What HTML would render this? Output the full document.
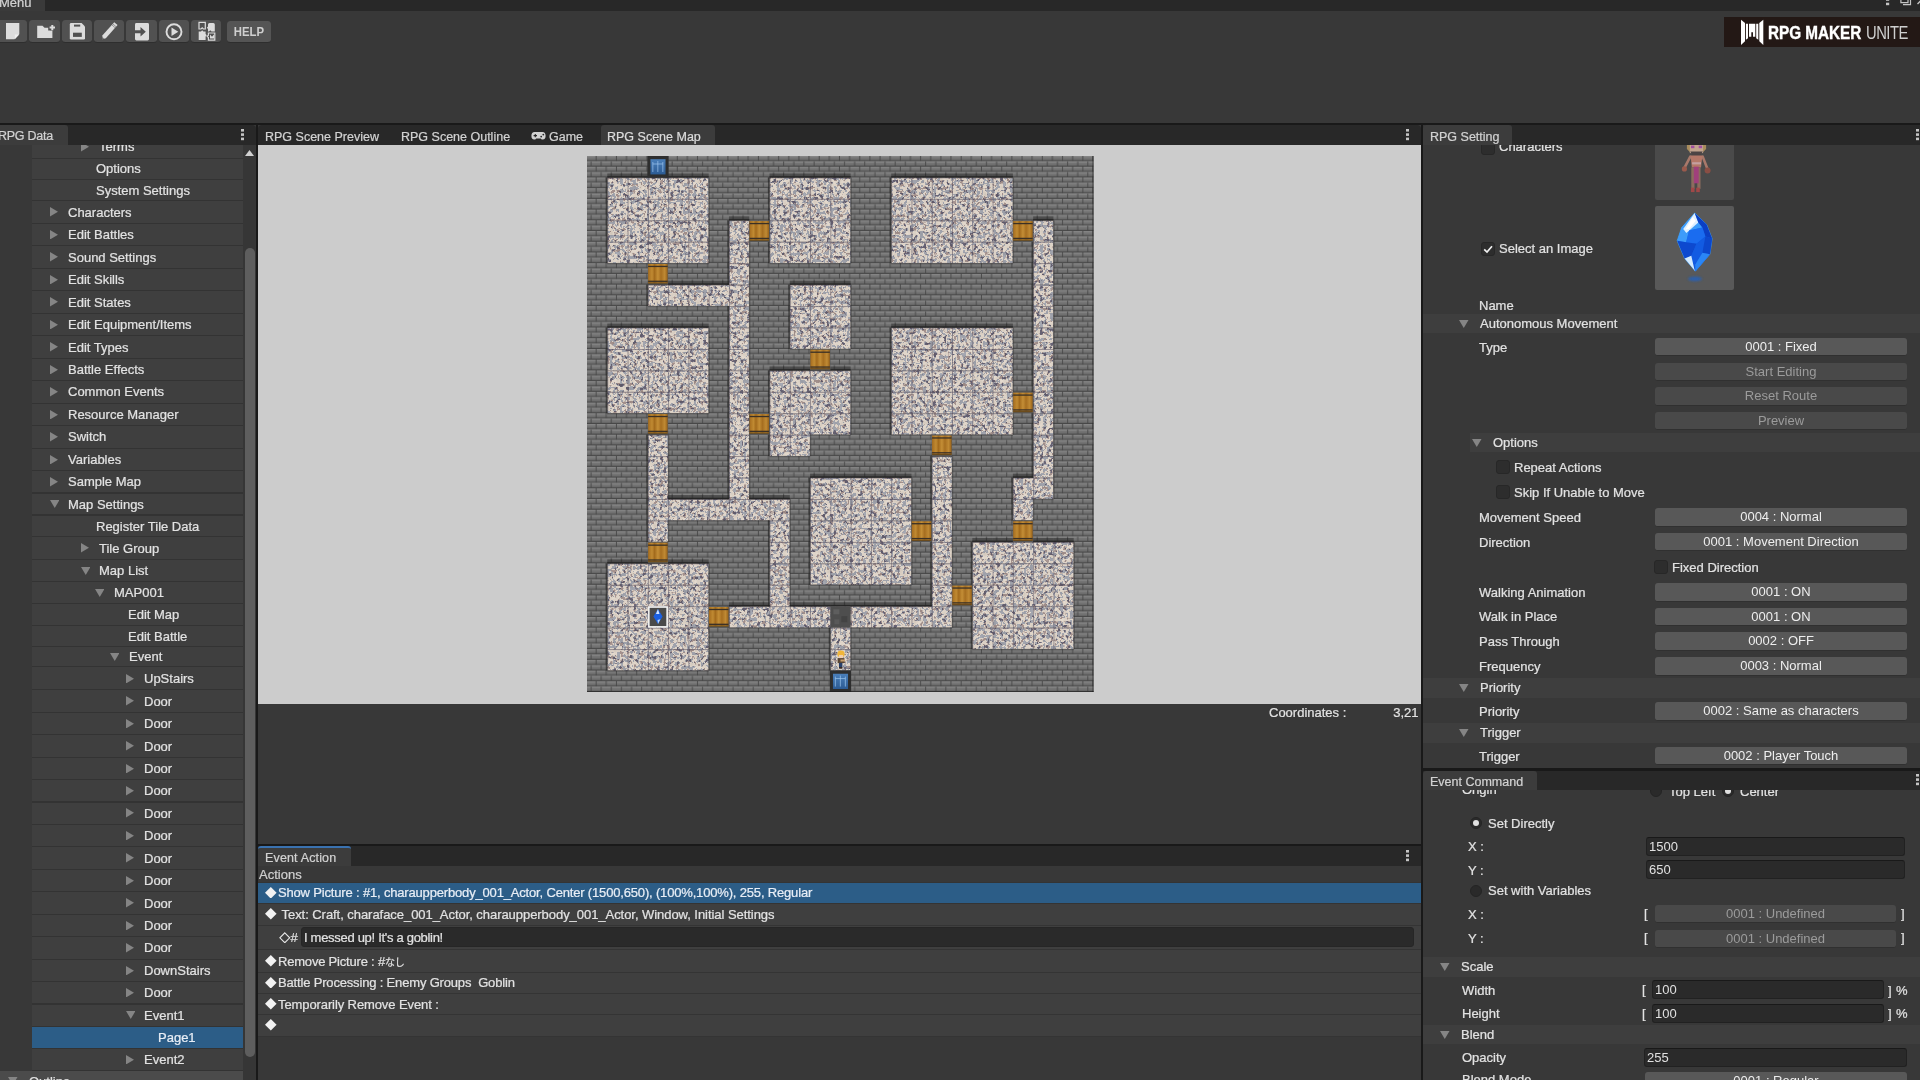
<!DOCTYPE html><html><head><meta charset="utf-8"><title>RPG Maker Unite</title><style>
html,body{margin:0;padding:0;background:#383838;}
body{width:1920px;height:1080px;overflow:hidden;position:relative;font-family:"Liberation Sans","Noto Sans CJK JP",sans-serif;font-size:13px;color:#dedede;line-height:16px;}
div,span,svg{position:absolute;box-sizing:border-box;white-space:nowrap;}
.t{height:16px;line-height:16px;-webkit-text-stroke:0.22px;}
.hdr{background:#282828;}
.tab{background:#3c3c3c;border-radius:0 3px 0 0;}
.tabt{font-size:12.5px;color:#d2d2d2;}
.row{background:#3f3f3f;left:32px;width:211px;}

.btn{background:#585858;border-radius:3px;text-align:center;color:#eeeeee;border-bottom:1px solid #303030;line-height:18px;}
.btn.dis{background:#494949;color:#9b9b9b;}
.inp{background:#2a2a2a;border:1px solid #212121;border-top-color:#191919;border-radius:3px;line-height:17px;color:#e0e0e0;}
.sec{background:#3e3e3e;}
.cb{width:14px;height:14px;background:#2d2d2d;border:1px solid #272727;border-radius:3px;}
.rd{width:12px;height:12px;background:#2a2a2a;border:1px solid #242424;border-radius:6px;}
.rd.on::after{content:"";position:absolute;left:2px;top:2px;width:6px;height:6px;border-radius:3px;background:#e0e0e0;}
.tb{background:#515151;border-radius:3.5px;top:20px;height:23.4px;border-bottom:1.2px solid #2e2e2e;}
.lrow{left:258px;width:1163px;background:#3f3f3f;}
.sel{background:#2c5d87;}
</style></head><body><div id="w" style="left:0;top:0;width:1920px;height:1080px;will-change:transform;overflow:hidden">
<div style="left:0;top:0;width:1920px;height:11px;background:#282828"></div>
<div style="left:0;top:0;width:45px;height:11px;background:#3a3a3a;overflow:hidden"><div class="t" style="left:-1px;top:-5px;color:#d2d2d2">Menu</div></div>
<svg style="left:1880px;top:0" width="40" height="11"><rect x="6" y="-1" width="3.2" height="1.8" fill="#c4c4c4"/><rect x="6" y="2.7" width="3.2" height="2.5" fill="#c4c4c4"/><path d="M20.9 0V2.6H28V0" fill="none" stroke="#c4c4c4" stroke-width="1.2"/><path d="M23 4.7H30.5V0" fill="none" stroke="#c4c4c4" stroke-width="1.2"/><path d="M37.5 4L41 0.5" stroke="#c4c4c4" stroke-width="1.4"/></svg>
<div class="tb" style="left:-3px;width:30.0px"></div>
<div class="tb" style="left:29.2px;width:30.8px"></div>
<div class="tb" style="left:62px;width:29.8px"></div>
<div class="tb" style="left:94px;width:30.0px"></div>
<div class="tb" style="left:126.2px;width:30.5px"></div>
<div class="tb" style="left:158.7px;width:30.1px"></div>
<div class="tb" style="left:191.2px;width:30.1px"></div>
<div class="tb" style="left:227px;width:44px;top:21px;height:22px;background:#555"></div>
<div class="t" style="left:227px;width:44px;top:24px;text-align:center;font-size:13.5px;font-weight:bold;color:#cfcfcf;-webkit-text-stroke:0;transform:scaleX(0.84)">HELP</div>
<svg style="left:0;top:20px" width="28" height="23"><path d="M6 3.1H19.3V14L14.3 19.2H6Z" fill="#dcdcdc"/><path d="M14.8 14.5H19.3L14.8 19.2Z" fill="#efefef"/></svg>
<svg style="left:29px;top:20px" width="31" height="23"><path d="M8.2 5.7H13.5L15.5 7.7H19.2V10.5H23.4V18H8.2Z" fill="#dcdcdc"/><path d="M20.6 7.6H26M23.3 4.9V10.3" stroke="#515151" stroke-width="4.4" fill="none"/><path d="M20.6 7.6H26M23.3 4.9V10.3" stroke="#dcdcdc" stroke-width="2" fill="none"/></svg>
<svg style="left:62px;top:20px" width="30" height="23"><path d="M9.2 3.1H19.6L23 6.5V18.2Q23 19.5 21.7 19.5H9.2Q7.8 19.5 7.8 18.2V4.4Q7.8 3.1 9.2 3.1Z" fill="#dcdcdc"/><rect x="12" y="4.6" width="6.2" height="2" fill="#515151"/><rect x="11" y="12.7" width="8.8" height="4.2" fill="#515151"/></svg>
<svg style="left:94px;top:20px" width="30" height="23"><path d="M8.1 19.2L8.55 15.34L20.25 2.14L23.55 5.06L11.85 18.26Z" fill="#dcdcdc"/><path d="M18.79 3.79L22.09 6.71M17.86 4.84L21.16 7.76" stroke="#515151" stroke-width="0.55"/><path d="M8.1 19.2L8.35 17L10 18.6Z" fill="#515151"/></svg>
<svg style="left:126px;top:20px" width="31" height="23"><path d="M10.4 3H21.6Q23 3 23 4.4V19.1Q23 20.5 21.6 20.5H10.4Q9 20.5 9 19.1V4.4Q9 3 10.4 3Z" fill="#dcdcdc"/><path d="M9 10.2H14.5V7L19.8 11.7L14.5 16.4V13.2H9Z" fill="#515151"/></svg>
<svg style="left:158px;top:20px" width="31" height="23"><circle cx="16" cy="11.8" r="7.5" fill="none" stroke="#dcdcdc" stroke-width="1.9"/><path d="M13.5 7.6L20.3 11.8L13.5 16Z" fill="#dcdcdc"/></svg>
<svg style="left:191px;top:20px" width="31" height="23"><path d="M8 2.3H14.3V9H12.3L11.2 7.8L10 9H8Z" fill="none" stroke="#dcdcdc" stroke-width="1.2"/><path d="M17 4.5Q17 3 18.5 3H22.3Q23.8 3 23.8 4.5V11.5H20.5L19.3 10.3L18 11.5H17V9L15.8 7.7L17 6.5Z" fill="#dcdcdc"/><path d="M7.7 11.5H10L11.2 10.3L12.4 11.5H14.6V14L15.8 15.2L14.6 16.4V20H7.7Z" fill="#dcdcdc"/><path d="M17.4 13H23.8V20.2H17.4V17.5L16.2 16.3L17.4 15.2Z" fill="none" stroke="#dcdcdc" stroke-width="1.2"/><path d="M19 14.5L21 16.8L23 14.5V18.5H19Z" fill="#dcdcdc"/></svg>
<div style="left:1724px;top:17px;width:196px;height:30px;background:#231815"></div>
<svg style="left:1740px;top:19px" width="26" height="28"><path d="M1 0.8L5 4V22.3L1 26Z" fill="#fff"/><path d="M5.9 4.7H8V19.2L5.9 20.8Z" fill="#fff"/><path d="M9 4.7H15.3V17.7H13V13.2H11.3V17.7H9Z" fill="#fff"/><path d="M16.2 4.7H18.3V20.8L16.2 19.2Z" fill="#fff"/><path d="M23.3 0.8L19.3 4V22.3L23.3 26Z" fill="#fff"/></svg>
<div class="t" style="left:1767.8px;top:24.6px;font-size:17.6px;font-weight:bold;color:#fff;-webkit-text-stroke:0.4px;transform-origin:0 50%;transform:scaleX(0.868)">RPG MAKER</div>
<div class="t" style="left:1865.5px;top:24.6px;font-size:17.6px;color:#cfcfcf;-webkit-text-stroke:0;letter-spacing:-0.6px;font-weight:normal;transform-origin:0 50%;transform:scaleX(0.84)">UNITE</div>
<div style="left:0;top:123px;width:1920px;height:2px;background:#191919"></div>
<div class="hdr" style="left:0;top:125px;width:256px;height:20px;border-radius:0 4px 0 0"></div>
<div class="tab" style="left:0;top:125px;width:68px;height:20px"></div>
<div class="t tabt" style="left:-2px;top:128.1px;letter-spacing:-0.25px">RPG Data</div>
<svg style="left:241px;top:129px" width="3" height="12"><rect x="0" y="0" width="3" height="2.6" fill="#c4c4c4"/><rect x="0" y="4.3" width="3" height="2.6" fill="#c4c4c4"/><rect x="0" y="8.6" width="3" height="2.6" fill="#c4c4c4"/></svg>
<div style="left:256px;top:125px;width:2px;height:955px;background:#191919"></div>
<div style="left:0;top:145px;width:256px;height:935px;overflow:hidden;background:#383838">
<div style="left:32px;top:0;width:211px;height:926px;background:#333"></div>
<div style="left:243px;top:0;width:13px;height:935px;background:#363636"></div>
<div class="row" style="top:-8.80px;height:21.30px"></div>
<svg style="left:81px;top:-3.0px" width="8" height="9.5"><path d="M0 0L8 4.75L0 9.5Z" fill="#858585"/></svg>
<div class="t " style="left:99px;top:-5.6px;color:#e2e2e2">Terms</div>
<div class="row" style="top:13.60px;height:20.15px"></div>
<div class="t " style="left:96px;top:16.2px;color:#e2e2e2">Options</div>
<div class="row" style="top:34.85px;height:20.40px"></div>
<div class="t " style="left:96px;top:37.6px;color:#e2e2e2">System Settings</div>
<div class="row" style="top:56.35px;height:21.38px"></div>
<svg style="left:50px;top:62.2px" width="8" height="9.5"><path d="M0 0L8 4.75L0 9.5Z" fill="#858585"/></svg>
<div class="t " style="left:68px;top:59.6px;color:#e2e2e2">Characters</div>
<div class="row" style="top:78.83px;height:21.38px"></div>
<svg style="left:50px;top:84.7px" width="8" height="9.5"><path d="M0 0L8 4.75L0 9.5Z" fill="#858585"/></svg>
<div class="t " style="left:68px;top:82.1px;color:#e2e2e2">Edit Battles</div>
<div class="row" style="top:101.31px;height:21.38px"></div>
<svg style="left:50px;top:107.2px" width="8" height="9.5"><path d="M0 0L8 4.75L0 9.5Z" fill="#858585"/></svg>
<div class="t " style="left:68px;top:104.5px;color:#e2e2e2">Sound Settings</div>
<div class="row" style="top:123.79px;height:21.38px"></div>
<svg style="left:50px;top:129.7px" width="8" height="9.5"><path d="M0 0L8 4.75L0 9.5Z" fill="#858585"/></svg>
<div class="t " style="left:68px;top:127.0px;color:#e2e2e2">Edit Skills</div>
<div class="row" style="top:146.27px;height:21.38px"></div>
<svg style="left:50px;top:152.2px" width="8" height="9.5"><path d="M0 0L8 4.75L0 9.5Z" fill="#858585"/></svg>
<div class="t " style="left:68px;top:149.5px;color:#e2e2e2">Edit States</div>
<div class="row" style="top:168.75px;height:21.38px"></div>
<svg style="left:50px;top:174.6px" width="8" height="9.5"><path d="M0 0L8 4.75L0 9.5Z" fill="#858585"/></svg>
<div class="t " style="left:68px;top:172.0px;color:#e2e2e2">Edit Equipment/Items</div>
<div class="row" style="top:191.23px;height:21.38px"></div>
<svg style="left:50px;top:197.1px" width="8" height="9.5"><path d="M0 0L8 4.75L0 9.5Z" fill="#858585"/></svg>
<div class="t " style="left:68px;top:194.5px;color:#e2e2e2">Edit Types</div>
<div class="row" style="top:213.71px;height:21.38px"></div>
<svg style="left:50px;top:219.6px" width="8" height="9.5"><path d="M0 0L8 4.75L0 9.5Z" fill="#858585"/></svg>
<div class="t " style="left:68px;top:217.0px;color:#e2e2e2">Battle Effects</div>
<div class="row" style="top:236.19px;height:21.38px"></div>
<svg style="left:50px;top:242.1px" width="8" height="9.5"><path d="M0 0L8 4.75L0 9.5Z" fill="#858585"/></svg>
<div class="t " style="left:68px;top:239.4px;color:#e2e2e2">Common Events</div>
<div class="row" style="top:258.67px;height:21.38px"></div>
<svg style="left:50px;top:264.6px" width="8" height="9.5"><path d="M0 0L8 4.75L0 9.5Z" fill="#858585"/></svg>
<div class="t " style="left:68px;top:261.9px;color:#e2e2e2">Resource Manager</div>
<div class="row" style="top:281.15px;height:21.38px"></div>
<svg style="left:50px;top:287.0px" width="8" height="9.5"><path d="M0 0L8 4.75L0 9.5Z" fill="#858585"/></svg>
<div class="t " style="left:68px;top:284.4px;color:#e2e2e2">Switch</div>
<div class="row" style="top:303.63px;height:21.38px"></div>
<svg style="left:50px;top:309.5px" width="8" height="9.5"><path d="M0 0L8 4.75L0 9.5Z" fill="#858585"/></svg>
<div class="t " style="left:68px;top:306.9px;color:#e2e2e2">Variables</div>
<div class="row" style="top:326.11px;height:21.38px"></div>
<svg style="left:50px;top:332.0px" width="8" height="9.5"><path d="M0 0L8 4.75L0 9.5Z" fill="#858585"/></svg>
<div class="t " style="left:68px;top:329.4px;color:#e2e2e2">Sample Map</div>
<div class="row" style="top:348.59px;height:20.91px"></div>
<svg style="left:49.5px;top:355.3px" width="9.5" height="8"><path d="M0 0L9.5 0L4.75 8Z" fill="#858585"/></svg>
<div class="t " style="left:68px;top:351.6px;color:#e2e2e2">Map Settings</div>
<div class="row" style="top:370.60px;height:20.65px"></div>
<div class="t " style="left:96px;top:373.5px;color:#e2e2e2">Register Tile Data</div>
<div class="row" style="top:392.35px;height:21.40px"></div>
<svg style="left:81px;top:398.2px" width="8" height="9.5"><path d="M0 0L8 4.75L0 9.5Z" fill="#858585"/></svg>
<div class="t " style="left:99px;top:395.6px;color:#e2e2e2">Tile Group</div>
<div class="row" style="top:414.85px;height:21.40px"></div>
<svg style="left:80.5px;top:421.8px" width="9.5" height="8"><path d="M0 0L9.5 0L4.75 8Z" fill="#858585"/></svg>
<div class="t " style="left:99px;top:418.1px;color:#e2e2e2">Map List</div>
<div class="row" style="top:437.35px;height:20.90px"></div>
<svg style="left:94.5px;top:444.1px" width="9.5" height="8"><path d="M0 0L9.5 0L4.75 8Z" fill="#858585"/></svg>
<div class="t " style="left:114px;top:440.4px;color:#e2e2e2">MAP001</div>
<div class="row" style="top:459.35px;height:20.65px"></div>
<div class="t " style="left:128px;top:462.2px;color:#e2e2e2">Edit Map</div>
<div class="row" style="top:481.10px;height:20.15px"></div>
<div class="t " style="left:128px;top:483.7px;color:#e2e2e2">Edit Battle</div>
<div class="row" style="top:502.35px;height:18.90px"></div>
<svg style="left:109.5px;top:508.0px" width="9.5" height="8"><path d="M0 0L9.5 0L4.75 8Z" fill="#858585"/></svg>
<div class="t " style="left:129px;top:504.4px;color:#e2e2e2">Event</div>
<div class="row" style="top:522.35px;height:21.90px"></div>
<svg style="left:126px;top:528.5px" width="8" height="9.5"><path d="M0 0L8 4.75L0 9.5Z" fill="#858585"/></svg>
<div class="t " style="left:144px;top:525.9px;color:#e2e2e2">UpStairs</div>
<div class="row" style="top:545.35px;height:21.34px"></div>
<svg style="left:126px;top:551.2px" width="8" height="9.5"><path d="M0 0L8 4.75L0 9.5Z" fill="#858585"/></svg>
<div class="t " style="left:144px;top:548.6px;color:#e2e2e2">Door</div>
<div class="row" style="top:567.79px;height:21.34px"></div>
<svg style="left:126px;top:573.7px" width="8" height="9.5"><path d="M0 0L8 4.75L0 9.5Z" fill="#858585"/></svg>
<div class="t " style="left:144px;top:571.0px;color:#e2e2e2">Door</div>
<div class="row" style="top:590.23px;height:21.34px"></div>
<svg style="left:126px;top:596.1px" width="8" height="9.5"><path d="M0 0L8 4.75L0 9.5Z" fill="#858585"/></svg>
<div class="t " style="left:144px;top:593.5px;color:#e2e2e2">Door</div>
<div class="row" style="top:612.67px;height:21.34px"></div>
<svg style="left:126px;top:618.5px" width="8" height="9.5"><path d="M0 0L8 4.75L0 9.5Z" fill="#858585"/></svg>
<div class="t " style="left:144px;top:615.9px;color:#e2e2e2">Door</div>
<div class="row" style="top:635.11px;height:21.34px"></div>
<svg style="left:126px;top:641.0px" width="8" height="9.5"><path d="M0 0L8 4.75L0 9.5Z" fill="#858585"/></svg>
<div class="t " style="left:144px;top:638.3px;color:#e2e2e2">Door</div>
<div class="row" style="top:657.55px;height:21.34px"></div>
<svg style="left:126px;top:663.4px" width="8" height="9.5"><path d="M0 0L8 4.75L0 9.5Z" fill="#858585"/></svg>
<div class="t " style="left:144px;top:660.8px;color:#e2e2e2">Door</div>
<div class="row" style="top:679.99px;height:21.34px"></div>
<svg style="left:126px;top:685.9px" width="8" height="9.5"><path d="M0 0L8 4.75L0 9.5Z" fill="#858585"/></svg>
<div class="t " style="left:144px;top:683.2px;color:#e2e2e2">Door</div>
<div class="row" style="top:702.43px;height:21.34px"></div>
<svg style="left:126px;top:708.3px" width="8" height="9.5"><path d="M0 0L8 4.75L0 9.5Z" fill="#858585"/></svg>
<div class="t " style="left:144px;top:705.6px;color:#e2e2e2">Door</div>
<div class="row" style="top:724.87px;height:21.34px"></div>
<svg style="left:126px;top:730.7px" width="8" height="9.5"><path d="M0 0L8 4.75L0 9.5Z" fill="#858585"/></svg>
<div class="t " style="left:144px;top:728.1px;color:#e2e2e2">Door</div>
<div class="row" style="top:747.31px;height:21.34px"></div>
<svg style="left:126px;top:753.2px" width="8" height="9.5"><path d="M0 0L8 4.75L0 9.5Z" fill="#858585"/></svg>
<div class="t " style="left:144px;top:750.5px;color:#e2e2e2">Door</div>
<div class="row" style="top:769.75px;height:21.34px"></div>
<svg style="left:126px;top:775.6px" width="8" height="9.5"><path d="M0 0L8 4.75L0 9.5Z" fill="#858585"/></svg>
<div class="t " style="left:144px;top:773.0px;color:#e2e2e2">Door</div>
<div class="row" style="top:792.19px;height:21.34px"></div>
<svg style="left:126px;top:798.1px" width="8" height="9.5"><path d="M0 0L8 4.75L0 9.5Z" fill="#858585"/></svg>
<div class="t " style="left:144px;top:795.4px;color:#e2e2e2">Door</div>
<div class="row" style="top:814.63px;height:21.34px"></div>
<svg style="left:126px;top:820.5px" width="8" height="9.5"><path d="M0 0L8 4.75L0 9.5Z" fill="#858585"/></svg>
<div class="t " style="left:144px;top:817.9px;color:#e2e2e2">DownStairs</div>
<div class="row" style="top:837.07px;height:21.34px"></div>
<svg style="left:126px;top:842.9px" width="8" height="9.5"><path d="M0 0L8 4.75L0 9.5Z" fill="#858585"/></svg>
<div class="t " style="left:144px;top:840.3px;color:#e2e2e2">Door</div>
<div class="row" style="top:859.51px;height:21.34px"></div>
<svg style="left:125.5px;top:866.4px" width="9.5" height="8"><path d="M0 0L9.5 0L4.75 8Z" fill="#858585"/></svg>
<div class="t " style="left:144px;top:862.7px;color:#e2e2e2">Event1</div>
<div class="row sel" style="top:881.95px;height:20.65px"></div>
<div class="t " style="left:158px;top:884.8px;color:#e8eef6">Page1</div>
<div class="row" style="top:903.70px;height:21.50px"></div>
<svg style="left:126px;top:909.6px" width="8" height="9.5"><path d="M0 0L8 4.75L0 9.5Z" fill="#858585"/></svg>
<div class="t " style="left:144px;top:907.0px;color:#e2e2e2">Event2</div>
<div style="left:0;top:926px;width:243px;height:9px;background:#4b4b4b"></div>
<svg style="left:8px;top:931.5px" width="9.5" height="8"><path d="M0 0L9.5 0L4.75 8Z" fill="#858585"/></svg>
<div class="t " style="left:29px;top:928.6px;color:#e2e2e2">Outline</div>
<svg style="left:245px;top:5px" width="9" height="6"><path d="M0 6L4.5 0L9 6Z" fill="#d0d0d0"/></svg>
<div style="left:244.7px;top:103px;width:10.3px;height:809px;background:#5e5e5e;border-radius:5px"></div>
</div>
<div class="hdr" style="left:258px;top:125px;width:1163px;height:20px;border-radius:4px 4px 0 0"></div>
<div class="tab" style="left:601px;top:125px;width:113.5px;height:20px;border-radius:3px 3px 0 0"></div>
<div class="t tabt" style="left:265px;top:128.6px;">RPG Scene Preview</div>
<div class="t tabt" style="left:401px;top:128.6px;">RPG Scene Outline</div>
<svg style="left:531px;top:131px" width="15" height="10"><path d="M3.6 1H11.4Q14.6 1 14.6 4.8Q14.6 8.6 11.8 8.6Q10.6 8.6 9.8 7.4H5.2Q4.4 8.6 3.2 8.6Q0.4 8.6 0.4 4.8Q0.4 1 3.6 1Z" fill="#d2d2d2"/><path d="M2.6 4.6H6M4.3 2.9V6.3" stroke="#282828" stroke-width="1.1"/><circle cx="10.2" cy="5.6" r="0.9" fill="#282828"/><circle cx="12.3" cy="3.6" r="0.9" fill="#282828"/></svg>
<div class="t tabt" style="left:549px;top:128.6px;">Game</div>
<div class="t tabt" style="left:607px;top:128.6px;color:#dcdcdc">RPG Scene Map</div>
<svg style="left:1406px;top:129px" width="3" height="12"><rect x="0" y="0" width="3" height="2.6" fill="#c4c4c4"/><rect x="0" y="4.3" width="3" height="2.6" fill="#c4c4c4"/><rect x="0" y="8.6" width="3" height="2.6" fill="#c4c4c4"/></svg>
<div style="left:258px;top:145px;width:1163px;height:558.8px;background:#cccccc"></div>
<svg style="left:587.2px;top:156px;filter:blur(0.35px)" width="506.6" height="536.4" viewBox="0 0 506.6 536.4">
<defs>
<pattern id="bk" width="20.28" height="21.44" patternUnits="userSpaceOnUse">
<rect width="20.28" height="21.44" fill="#747474"/>
<rect x="0" y="0.00" width="20.28" height="1.3" fill="#858585"/>
<rect x="0" y="3.16" width="20.28" height="1.2" fill="#686868"/>
<rect x="0" y="4.36" width="20.28" height="0.9" fill="#434343"/>
<rect x="-1.50" y="0.00" width="0.9" height="5.36" fill="#474747"/>
<rect x="8.64" y="0.00" width="0.9" height="5.36" fill="#474747"/>
<rect x="18.78" y="0.00" width="0.9" height="5.36" fill="#474747"/>
<rect x="28.92" y="0.00" width="0.9" height="5.36" fill="#474747"/>
<rect x="0" y="5.36" width="20.28" height="1.3" fill="#858585"/>
<rect x="0" y="8.52" width="20.28" height="1.2" fill="#686868"/>
<rect x="0" y="9.72" width="20.28" height="0.9" fill="#434343"/>
<rect x="-6.57" y="5.36" width="0.9" height="5.36" fill="#474747"/>
<rect x="3.57" y="5.36" width="0.9" height="5.36" fill="#474747"/>
<rect x="13.71" y="5.36" width="0.9" height="5.36" fill="#474747"/>
<rect x="23.85" y="5.36" width="0.9" height="5.36" fill="#474747"/>
<rect x="0" y="10.72" width="20.28" height="1.3" fill="#858585"/>
<rect x="0" y="13.88" width="20.28" height="1.2" fill="#686868"/>
<rect x="0" y="15.08" width="20.28" height="0.9" fill="#434343"/>
<rect x="-1.50" y="10.72" width="0.9" height="5.36" fill="#474747"/>
<rect x="8.64" y="10.72" width="0.9" height="5.36" fill="#474747"/>
<rect x="18.78" y="10.72" width="0.9" height="5.36" fill="#474747"/>
<rect x="28.92" y="10.72" width="0.9" height="5.36" fill="#474747"/>
<rect x="0" y="16.08" width="20.28" height="1.3" fill="#858585"/>
<rect x="0" y="19.24" width="20.28" height="1.2" fill="#686868"/>
<rect x="0" y="20.44" width="20.28" height="0.9" fill="#434343"/>
<rect x="-6.57" y="16.08" width="0.9" height="5.36" fill="#474747"/>
<rect x="3.57" y="16.08" width="0.9" height="5.36" fill="#474747"/>
<rect x="13.71" y="16.08" width="0.9" height="5.36" fill="#474747"/>
<rect x="23.85" y="16.08" width="0.9" height="5.36" fill="#474747"/>
</pattern>
<pattern id="gr" width="20.28" height="21.44" patternUnits="userSpaceOnUse"><rect x="0" y="0" width="0.9" height="21.44" fill="#5c5464" opacity="0.62"/><rect x="0" y="0" width="20.28" height="0.9" fill="#5c5464" opacity="0.62"/></pattern>
<filter id="st" x="0" y="0" width="100%" height="100%" color-interpolation-filters="sRGB"><feTurbulence type="fractalNoise" baseFrequency="0.3 0.29" numOctaves="2" seed="4"/><feComponentTransfer><feFuncR type="discrete" tableValues="0 0 0 0 0 0 0 0 0 0 1 1 1 1 1 1 1 1 1 1 1"/><feFuncG type="discrete" tableValues="1 1 1 1 1 1 1 1 0.5 0 0 0 0 0 0 0 0 0 0 0 0"/><feFuncB type="linear" slope="1" intercept="0"/><feFuncA type="linear" slope="0" intercept="1"/></feComponentTransfer><feColorMatrix type="matrix" values="0.235 -0.23 0.12 0 0.567  0.185 -0.26 0.12 0 0.577  0.105 -0.23 0.12 0 0.612  0 0 0 0 1"/></filter>
<linearGradient id="wd" x1="0" x2="1" y1="0" y2="0"><stop offset="0" stop-color="#a56c1e"/><stop offset="0.2" stop-color="#c08a32"/><stop offset="0.33" stop-color="#a26a1c"/><stop offset="0.5" stop-color="#c48e36"/><stop offset="0.66" stop-color="#a66e20"/><stop offset="0.85" stop-color="#c08a34"/><stop offset="1" stop-color="#966018"/></linearGradient>
<linearGradient id="bl" x1="0" x2="0" y1="0" y2="1"><stop offset="0" stop-color="#4a7fba"/><stop offset="1" stop-color="#2c5b94"/></linearGradient>
</defs>
<rect width="506.6" height="536.4" fill="url(#bk)"/>
<clipPath id="fc">
<rect x="20.28" y="21.44" width="101.40" height="21.49"/>
<rect x="182.52" y="21.44" width="81.12" height="21.49"/>
<rect x="304.20" y="21.44" width="121.68" height="21.49"/>
<rect x="20.28" y="42.88" width="101.40" height="21.49"/>
<rect x="182.52" y="42.88" width="81.12" height="21.49"/>
<rect x="304.20" y="42.88" width="121.68" height="21.49"/>
<rect x="20.28" y="64.32" width="101.40" height="21.49"/>
<rect x="141.96" y="64.32" width="20.28" height="21.49"/>
<rect x="182.52" y="64.32" width="81.12" height="21.49"/>
<rect x="304.20" y="64.32" width="121.68" height="21.49"/>
<rect x="446.16" y="64.32" width="20.28" height="21.49"/>
<rect x="20.28" y="85.76" width="101.40" height="21.49"/>
<rect x="141.96" y="85.76" width="20.28" height="21.49"/>
<rect x="182.52" y="85.76" width="81.12" height="21.49"/>
<rect x="304.20" y="85.76" width="121.68" height="21.49"/>
<rect x="446.16" y="85.76" width="20.28" height="21.49"/>
<rect x="141.96" y="107.20" width="20.28" height="21.49"/>
<rect x="446.16" y="107.20" width="20.28" height="21.49"/>
<rect x="60.84" y="128.64" width="101.40" height="21.49"/>
<rect x="202.80" y="128.64" width="60.84" height="21.49"/>
<rect x="446.16" y="128.64" width="20.28" height="21.49"/>
<rect x="141.96" y="150.08" width="20.28" height="21.49"/>
<rect x="202.80" y="150.08" width="60.84" height="21.49"/>
<rect x="446.16" y="150.08" width="20.28" height="21.49"/>
<rect x="20.28" y="171.52" width="101.40" height="21.49"/>
<rect x="141.96" y="171.52" width="20.28" height="21.49"/>
<rect x="202.80" y="171.52" width="60.84" height="21.49"/>
<rect x="304.20" y="171.52" width="121.68" height="21.49"/>
<rect x="446.16" y="171.52" width="20.28" height="21.49"/>
<rect x="20.28" y="192.96" width="101.40" height="21.49"/>
<rect x="141.96" y="192.96" width="20.28" height="21.49"/>
<rect x="304.20" y="192.96" width="121.68" height="21.49"/>
<rect x="446.16" y="192.96" width="20.28" height="21.49"/>
<rect x="20.28" y="214.40" width="101.40" height="21.49"/>
<rect x="141.96" y="214.40" width="20.28" height="21.49"/>
<rect x="182.52" y="214.40" width="81.12" height="21.49"/>
<rect x="304.20" y="214.40" width="121.68" height="21.49"/>
<rect x="446.16" y="214.40" width="20.28" height="21.49"/>
<rect x="20.28" y="235.84" width="101.40" height="21.49"/>
<rect x="141.96" y="235.84" width="20.28" height="21.49"/>
<rect x="182.52" y="235.84" width="81.12" height="21.49"/>
<rect x="304.20" y="235.84" width="121.68" height="21.49"/>
<rect x="446.16" y="235.84" width="20.28" height="21.49"/>
<rect x="141.96" y="257.28" width="20.28" height="21.49"/>
<rect x="182.52" y="257.28" width="81.12" height="21.49"/>
<rect x="304.20" y="257.28" width="121.68" height="21.49"/>
<rect x="446.16" y="257.28" width="20.28" height="21.49"/>
<rect x="60.84" y="278.72" width="20.28" height="21.49"/>
<rect x="141.96" y="278.72" width="20.28" height="21.49"/>
<rect x="182.52" y="278.72" width="40.56" height="21.49"/>
<rect x="446.16" y="278.72" width="20.28" height="21.49"/>
<rect x="60.84" y="300.16" width="20.28" height="21.49"/>
<rect x="141.96" y="300.16" width="20.28" height="21.49"/>
<rect x="344.76" y="300.16" width="20.28" height="21.49"/>
<rect x="446.16" y="300.16" width="20.28" height="21.49"/>
<rect x="60.84" y="321.60" width="20.28" height="21.49"/>
<rect x="141.96" y="321.60" width="20.28" height="21.49"/>
<rect x="223.08" y="321.60" width="101.40" height="21.49"/>
<rect x="344.76" y="321.60" width="20.28" height="21.49"/>
<rect x="425.88" y="321.60" width="40.56" height="21.49"/>
<rect x="60.84" y="343.04" width="141.96" height="21.49"/>
<rect x="223.08" y="343.04" width="101.40" height="21.49"/>
<rect x="344.76" y="343.04" width="20.28" height="21.49"/>
<rect x="425.88" y="343.04" width="20.28" height="21.49"/>
<rect x="60.84" y="364.48" width="20.28" height="21.49"/>
<rect x="182.52" y="364.48" width="20.28" height="21.49"/>
<rect x="223.08" y="364.48" width="101.40" height="21.49"/>
<rect x="344.76" y="364.48" width="20.28" height="21.49"/>
<rect x="182.52" y="385.92" width="20.28" height="21.49"/>
<rect x="223.08" y="385.92" width="101.40" height="21.49"/>
<rect x="344.76" y="385.92" width="20.28" height="21.49"/>
<rect x="385.32" y="385.92" width="101.40" height="21.49"/>
<rect x="20.28" y="407.36" width="101.40" height="21.49"/>
<rect x="182.52" y="407.36" width="20.28" height="21.49"/>
<rect x="223.08" y="407.36" width="101.40" height="21.49"/>
<rect x="344.76" y="407.36" width="20.28" height="21.49"/>
<rect x="385.32" y="407.36" width="101.40" height="21.49"/>
<rect x="20.28" y="428.80" width="101.40" height="21.49"/>
<rect x="182.52" y="428.80" width="20.28" height="21.49"/>
<rect x="344.76" y="428.80" width="20.28" height="21.49"/>
<rect x="385.32" y="428.80" width="101.40" height="21.49"/>
<rect x="20.28" y="450.24" width="101.40" height="21.49"/>
<rect x="141.96" y="450.24" width="223.08" height="21.49"/>
<rect x="385.32" y="450.24" width="101.40" height="21.49"/>
<rect x="20.28" y="471.68" width="101.40" height="21.49"/>
<rect x="243.36" y="471.68" width="20.28" height="21.49"/>
<rect x="385.32" y="471.68" width="101.40" height="21.49"/>
<rect x="20.28" y="493.12" width="101.40" height="21.49"/>
<rect x="243.36" y="493.12" width="20.28" height="21.49"/>
</clipPath>
<g clip-path="url(#fc)"><rect width="506.6" height="536.4" fill="#ccc" filter="url(#st)"/><rect width="506.6" height="536.4" fill="url(#gr)"/></g>
<rect x="20.28" y="17.44" width="20.28" height="4" fill="#000" opacity="0.32"/>
<rect x="20.28" y="20.24" width="20.28" height="1.6" fill="#222" opacity="0.7"/>
<rect x="18.78" y="21.44" width="1.8" height="21.44" fill="#222" opacity="0.6"/>
<rect x="18.78" y="42.88" width="1.8" height="21.44" fill="#222" opacity="0.6"/>
<rect x="18.78" y="64.32" width="1.8" height="21.44" fill="#222" opacity="0.6"/>
<rect x="18.78" y="85.76" width="1.8" height="21.44" fill="#222" opacity="0.6"/>
<rect x="20.28" y="106.90" width="20.28" height="1.5" fill="#333" opacity="0.45"/>
<rect x="20.28" y="167.52" width="20.28" height="4" fill="#000" opacity="0.32"/>
<rect x="20.28" y="170.32" width="20.28" height="1.6" fill="#222" opacity="0.7"/>
<rect x="18.78" y="171.52" width="1.8" height="21.44" fill="#222" opacity="0.6"/>
<rect x="18.78" y="192.96" width="1.8" height="21.44" fill="#222" opacity="0.6"/>
<rect x="18.78" y="214.40" width="1.8" height="21.44" fill="#222" opacity="0.6"/>
<rect x="18.78" y="235.84" width="1.8" height="21.44" fill="#222" opacity="0.6"/>
<rect x="20.28" y="256.98" width="20.28" height="1.5" fill="#333" opacity="0.45"/>
<rect x="20.28" y="403.36" width="20.28" height="4" fill="#000" opacity="0.32"/>
<rect x="20.28" y="406.16" width="20.28" height="1.6" fill="#222" opacity="0.7"/>
<rect x="18.78" y="407.36" width="1.8" height="21.44" fill="#222" opacity="0.6"/>
<rect x="18.78" y="428.80" width="1.8" height="21.44" fill="#222" opacity="0.6"/>
<rect x="18.78" y="450.24" width="1.8" height="21.44" fill="#222" opacity="0.6"/>
<rect x="18.78" y="471.68" width="1.8" height="21.44" fill="#222" opacity="0.6"/>
<rect x="18.78" y="493.12" width="1.8" height="21.44" fill="#222" opacity="0.6"/>
<rect x="20.28" y="514.26" width="20.28" height="1.5" fill="#333" opacity="0.45"/>
<rect x="40.56" y="17.44" width="20.28" height="4" fill="#000" opacity="0.32"/>
<rect x="40.56" y="20.24" width="20.28" height="1.6" fill="#222" opacity="0.7"/>
<rect x="40.56" y="106.90" width="20.28" height="1.5" fill="#333" opacity="0.45"/>
<rect x="40.56" y="167.52" width="20.28" height="4" fill="#000" opacity="0.32"/>
<rect x="40.56" y="170.32" width="20.28" height="1.6" fill="#222" opacity="0.7"/>
<rect x="40.56" y="256.98" width="20.28" height="1.5" fill="#333" opacity="0.45"/>
<rect x="40.56" y="403.36" width="20.28" height="4" fill="#000" opacity="0.32"/>
<rect x="40.56" y="406.16" width="20.28" height="1.6" fill="#222" opacity="0.7"/>
<rect x="40.56" y="514.26" width="20.28" height="1.5" fill="#333" opacity="0.45"/>
<rect x="60.84" y="17.44" width="20.28" height="4" fill="#000" opacity="0.32"/>
<rect x="60.84" y="20.24" width="20.28" height="1.6" fill="#222" opacity="0.7"/>
<rect x="60.84" y="106.90" width="20.28" height="1.5" fill="#333" opacity="0.45"/>
<rect x="60.84" y="124.64" width="20.28" height="4" fill="#000" opacity="0.32"/>
<rect x="60.84" y="127.44" width="20.28" height="1.6" fill="#222" opacity="0.7"/>
<rect x="59.34" y="128.64" width="1.8" height="21.44" fill="#222" opacity="0.6"/>
<rect x="60.84" y="149.78" width="20.28" height="1.5" fill="#333" opacity="0.45"/>
<rect x="60.84" y="167.52" width="20.28" height="4" fill="#000" opacity="0.32"/>
<rect x="60.84" y="170.32" width="20.28" height="1.6" fill="#222" opacity="0.7"/>
<rect x="60.84" y="256.98" width="20.28" height="1.5" fill="#333" opacity="0.45"/>
<rect x="60.84" y="274.72" width="20.28" height="4" fill="#000" opacity="0.32"/>
<rect x="60.84" y="277.52" width="20.28" height="1.6" fill="#222" opacity="0.7"/>
<rect x="59.34" y="278.72" width="1.8" height="21.44" fill="#222" opacity="0.6"/>
<rect x="80.82" y="278.72" width="1.5" height="21.44" fill="#333" opacity="0.45"/>
<rect x="59.34" y="300.16" width="1.8" height="21.44" fill="#222" opacity="0.6"/>
<rect x="80.82" y="300.16" width="1.5" height="21.44" fill="#333" opacity="0.45"/>
<rect x="59.34" y="321.60" width="1.8" height="21.44" fill="#222" opacity="0.6"/>
<rect x="80.82" y="321.60" width="1.5" height="21.44" fill="#333" opacity="0.45"/>
<rect x="59.34" y="343.04" width="1.8" height="21.44" fill="#222" opacity="0.6"/>
<rect x="59.34" y="364.48" width="1.8" height="21.44" fill="#222" opacity="0.6"/>
<rect x="80.82" y="364.48" width="1.5" height="21.44" fill="#333" opacity="0.45"/>
<rect x="60.84" y="385.62" width="20.28" height="1.5" fill="#333" opacity="0.45"/>
<rect x="60.84" y="403.36" width="20.28" height="4" fill="#000" opacity="0.32"/>
<rect x="60.84" y="406.16" width="20.28" height="1.6" fill="#222" opacity="0.7"/>
<rect x="60.84" y="514.26" width="20.28" height="1.5" fill="#333" opacity="0.45"/>
<rect x="81.12" y="17.44" width="20.28" height="4" fill="#000" opacity="0.32"/>
<rect x="81.12" y="20.24" width="20.28" height="1.6" fill="#222" opacity="0.7"/>
<rect x="81.12" y="106.90" width="20.28" height="1.5" fill="#333" opacity="0.45"/>
<rect x="81.12" y="124.64" width="20.28" height="4" fill="#000" opacity="0.32"/>
<rect x="81.12" y="127.44" width="20.28" height="1.6" fill="#222" opacity="0.7"/>
<rect x="81.12" y="149.78" width="20.28" height="1.5" fill="#333" opacity="0.45"/>
<rect x="81.12" y="167.52" width="20.28" height="4" fill="#000" opacity="0.32"/>
<rect x="81.12" y="170.32" width="20.28" height="1.6" fill="#222" opacity="0.7"/>
<rect x="81.12" y="256.98" width="20.28" height="1.5" fill="#333" opacity="0.45"/>
<rect x="81.12" y="339.04" width="20.28" height="4" fill="#000" opacity="0.32"/>
<rect x="81.12" y="341.84" width="20.28" height="1.6" fill="#222" opacity="0.7"/>
<rect x="81.12" y="364.18" width="20.28" height="1.5" fill="#333" opacity="0.45"/>
<rect x="81.12" y="403.36" width="20.28" height="4" fill="#000" opacity="0.32"/>
<rect x="81.12" y="406.16" width="20.28" height="1.6" fill="#222" opacity="0.7"/>
<rect x="81.12" y="514.26" width="20.28" height="1.5" fill="#333" opacity="0.45"/>
<rect x="101.40" y="17.44" width="20.28" height="4" fill="#000" opacity="0.32"/>
<rect x="101.40" y="20.24" width="20.28" height="1.6" fill="#222" opacity="0.7"/>
<rect x="121.38" y="21.44" width="1.5" height="21.44" fill="#333" opacity="0.45"/>
<rect x="121.38" y="42.88" width="1.5" height="21.44" fill="#333" opacity="0.45"/>
<rect x="121.38" y="64.32" width="1.5" height="21.44" fill="#333" opacity="0.45"/>
<rect x="121.38" y="85.76" width="1.5" height="21.44" fill="#333" opacity="0.45"/>
<rect x="101.40" y="106.90" width="20.28" height="1.5" fill="#333" opacity="0.45"/>
<rect x="101.40" y="124.64" width="20.28" height="4" fill="#000" opacity="0.32"/>
<rect x="101.40" y="127.44" width="20.28" height="1.6" fill="#222" opacity="0.7"/>
<rect x="101.40" y="149.78" width="20.28" height="1.5" fill="#333" opacity="0.45"/>
<rect x="101.40" y="167.52" width="20.28" height="4" fill="#000" opacity="0.32"/>
<rect x="101.40" y="170.32" width="20.28" height="1.6" fill="#222" opacity="0.7"/>
<rect x="121.38" y="171.52" width="1.5" height="21.44" fill="#333" opacity="0.45"/>
<rect x="121.38" y="192.96" width="1.5" height="21.44" fill="#333" opacity="0.45"/>
<rect x="121.38" y="214.40" width="1.5" height="21.44" fill="#333" opacity="0.45"/>
<rect x="121.38" y="235.84" width="1.5" height="21.44" fill="#333" opacity="0.45"/>
<rect x="101.40" y="256.98" width="20.28" height="1.5" fill="#333" opacity="0.45"/>
<rect x="101.40" y="339.04" width="20.28" height="4" fill="#000" opacity="0.32"/>
<rect x="101.40" y="341.84" width="20.28" height="1.6" fill="#222" opacity="0.7"/>
<rect x="101.40" y="364.18" width="20.28" height="1.5" fill="#333" opacity="0.45"/>
<rect x="101.40" y="403.36" width="20.28" height="4" fill="#000" opacity="0.32"/>
<rect x="101.40" y="406.16" width="20.28" height="1.6" fill="#222" opacity="0.7"/>
<rect x="121.38" y="407.36" width="1.5" height="21.44" fill="#333" opacity="0.45"/>
<rect x="121.38" y="428.80" width="1.5" height="21.44" fill="#333" opacity="0.45"/>
<rect x="121.38" y="450.24" width="1.5" height="21.44" fill="#333" opacity="0.45"/>
<rect x="121.38" y="471.68" width="1.5" height="21.44" fill="#333" opacity="0.45"/>
<rect x="121.38" y="493.12" width="1.5" height="21.44" fill="#333" opacity="0.45"/>
<rect x="101.40" y="514.26" width="20.28" height="1.5" fill="#333" opacity="0.45"/>
<rect x="121.68" y="124.64" width="20.28" height="4" fill="#000" opacity="0.32"/>
<rect x="121.68" y="127.44" width="20.28" height="1.6" fill="#222" opacity="0.7"/>
<rect x="121.68" y="149.78" width="20.28" height="1.5" fill="#333" opacity="0.45"/>
<rect x="121.68" y="339.04" width="20.28" height="4" fill="#000" opacity="0.32"/>
<rect x="121.68" y="341.84" width="20.28" height="1.6" fill="#222" opacity="0.7"/>
<rect x="121.68" y="364.18" width="20.28" height="1.5" fill="#333" opacity="0.45"/>
<rect x="141.96" y="60.32" width="20.28" height="4" fill="#000" opacity="0.32"/>
<rect x="141.96" y="63.12" width="20.28" height="1.6" fill="#222" opacity="0.7"/>
<rect x="140.46" y="64.32" width="1.8" height="21.44" fill="#222" opacity="0.6"/>
<rect x="161.94" y="64.32" width="1.5" height="21.44" fill="#333" opacity="0.45"/>
<rect x="140.46" y="85.76" width="1.8" height="21.44" fill="#222" opacity="0.6"/>
<rect x="161.94" y="85.76" width="1.5" height="21.44" fill="#333" opacity="0.45"/>
<rect x="140.46" y="107.20" width="1.8" height="21.44" fill="#222" opacity="0.6"/>
<rect x="161.94" y="107.20" width="1.5" height="21.44" fill="#333" opacity="0.45"/>
<rect x="161.94" y="128.64" width="1.5" height="21.44" fill="#333" opacity="0.45"/>
<rect x="140.46" y="150.08" width="1.8" height="21.44" fill="#222" opacity="0.6"/>
<rect x="161.94" y="150.08" width="1.5" height="21.44" fill="#333" opacity="0.45"/>
<rect x="140.46" y="171.52" width="1.8" height="21.44" fill="#222" opacity="0.6"/>
<rect x="161.94" y="171.52" width="1.5" height="21.44" fill="#333" opacity="0.45"/>
<rect x="140.46" y="192.96" width="1.8" height="21.44" fill="#222" opacity="0.6"/>
<rect x="161.94" y="192.96" width="1.5" height="21.44" fill="#333" opacity="0.45"/>
<rect x="140.46" y="214.40" width="1.8" height="21.44" fill="#222" opacity="0.6"/>
<rect x="161.94" y="214.40" width="1.5" height="21.44" fill="#333" opacity="0.45"/>
<rect x="140.46" y="235.84" width="1.8" height="21.44" fill="#222" opacity="0.6"/>
<rect x="161.94" y="235.84" width="1.5" height="21.44" fill="#333" opacity="0.45"/>
<rect x="140.46" y="257.28" width="1.8" height="21.44" fill="#222" opacity="0.6"/>
<rect x="161.94" y="257.28" width="1.5" height="21.44" fill="#333" opacity="0.45"/>
<rect x="140.46" y="278.72" width="1.8" height="21.44" fill="#222" opacity="0.6"/>
<rect x="161.94" y="278.72" width="1.5" height="21.44" fill="#333" opacity="0.45"/>
<rect x="140.46" y="300.16" width="1.8" height="21.44" fill="#222" opacity="0.6"/>
<rect x="161.94" y="300.16" width="1.5" height="21.44" fill="#333" opacity="0.45"/>
<rect x="140.46" y="321.60" width="1.8" height="21.44" fill="#222" opacity="0.6"/>
<rect x="161.94" y="321.60" width="1.5" height="21.44" fill="#333" opacity="0.45"/>
<rect x="141.96" y="364.18" width="20.28" height="1.5" fill="#333" opacity="0.45"/>
<rect x="141.96" y="446.24" width="20.28" height="4" fill="#000" opacity="0.32"/>
<rect x="141.96" y="449.04" width="20.28" height="1.6" fill="#222" opacity="0.7"/>
<rect x="140.46" y="450.24" width="1.8" height="21.44" fill="#222" opacity="0.6"/>
<rect x="141.96" y="471.38" width="20.28" height="1.5" fill="#333" opacity="0.45"/>
<rect x="162.24" y="339.04" width="20.28" height="4" fill="#000" opacity="0.32"/>
<rect x="162.24" y="341.84" width="20.28" height="1.6" fill="#222" opacity="0.7"/>
<rect x="162.24" y="364.18" width="20.28" height="1.5" fill="#333" opacity="0.45"/>
<rect x="162.24" y="446.24" width="20.28" height="4" fill="#000" opacity="0.32"/>
<rect x="162.24" y="449.04" width="20.28" height="1.6" fill="#222" opacity="0.7"/>
<rect x="162.24" y="471.38" width="20.28" height="1.5" fill="#333" opacity="0.45"/>
<rect x="182.52" y="17.44" width="20.28" height="4" fill="#000" opacity="0.32"/>
<rect x="182.52" y="20.24" width="20.28" height="1.6" fill="#222" opacity="0.7"/>
<rect x="181.02" y="21.44" width="1.8" height="21.44" fill="#222" opacity="0.6"/>
<rect x="181.02" y="42.88" width="1.8" height="21.44" fill="#222" opacity="0.6"/>
<rect x="181.02" y="64.32" width="1.8" height="21.44" fill="#222" opacity="0.6"/>
<rect x="181.02" y="85.76" width="1.8" height="21.44" fill="#222" opacity="0.6"/>
<rect x="182.52" y="106.90" width="20.28" height="1.5" fill="#333" opacity="0.45"/>
<rect x="182.52" y="210.40" width="20.28" height="4" fill="#000" opacity="0.32"/>
<rect x="182.52" y="213.20" width="20.28" height="1.6" fill="#222" opacity="0.7"/>
<rect x="181.02" y="214.40" width="1.8" height="21.44" fill="#222" opacity="0.6"/>
<rect x="181.02" y="235.84" width="1.8" height="21.44" fill="#222" opacity="0.6"/>
<rect x="181.02" y="257.28" width="1.8" height="21.44" fill="#222" opacity="0.6"/>
<rect x="181.02" y="278.72" width="1.8" height="21.44" fill="#222" opacity="0.6"/>
<rect x="182.52" y="299.86" width="20.28" height="1.5" fill="#333" opacity="0.45"/>
<rect x="182.52" y="339.04" width="20.28" height="4" fill="#000" opacity="0.32"/>
<rect x="182.52" y="341.84" width="20.28" height="1.6" fill="#222" opacity="0.7"/>
<rect x="202.50" y="343.04" width="1.5" height="21.44" fill="#333" opacity="0.45"/>
<rect x="181.02" y="364.48" width="1.8" height="21.44" fill="#222" opacity="0.6"/>
<rect x="202.50" y="364.48" width="1.5" height="21.44" fill="#333" opacity="0.45"/>
<rect x="181.02" y="385.92" width="1.8" height="21.44" fill="#222" opacity="0.6"/>
<rect x="202.50" y="385.92" width="1.5" height="21.44" fill="#333" opacity="0.45"/>
<rect x="181.02" y="407.36" width="1.8" height="21.44" fill="#222" opacity="0.6"/>
<rect x="202.50" y="407.36" width="1.5" height="21.44" fill="#333" opacity="0.45"/>
<rect x="181.02" y="428.80" width="1.8" height="21.44" fill="#222" opacity="0.6"/>
<rect x="202.50" y="428.80" width="1.5" height="21.44" fill="#333" opacity="0.45"/>
<rect x="182.52" y="471.38" width="20.28" height="1.5" fill="#333" opacity="0.45"/>
<rect x="202.80" y="17.44" width="20.28" height="4" fill="#000" opacity="0.32"/>
<rect x="202.80" y="20.24" width="20.28" height="1.6" fill="#222" opacity="0.7"/>
<rect x="202.80" y="106.90" width="20.28" height="1.5" fill="#333" opacity="0.45"/>
<rect x="202.80" y="124.64" width="20.28" height="4" fill="#000" opacity="0.32"/>
<rect x="202.80" y="127.44" width="20.28" height="1.6" fill="#222" opacity="0.7"/>
<rect x="201.30" y="128.64" width="1.8" height="21.44" fill="#222" opacity="0.6"/>
<rect x="201.30" y="150.08" width="1.8" height="21.44" fill="#222" opacity="0.6"/>
<rect x="201.30" y="171.52" width="1.8" height="21.44" fill="#222" opacity="0.6"/>
<rect x="202.80" y="192.66" width="20.28" height="1.5" fill="#333" opacity="0.45"/>
<rect x="202.80" y="210.40" width="20.28" height="4" fill="#000" opacity="0.32"/>
<rect x="202.80" y="213.20" width="20.28" height="1.6" fill="#222" opacity="0.7"/>
<rect x="222.78" y="278.72" width="1.5" height="21.44" fill="#333" opacity="0.45"/>
<rect x="202.80" y="299.86" width="20.28" height="1.5" fill="#333" opacity="0.45"/>
<rect x="202.80" y="446.24" width="20.28" height="4" fill="#000" opacity="0.32"/>
<rect x="202.80" y="449.04" width="20.28" height="1.6" fill="#222" opacity="0.7"/>
<rect x="202.80" y="471.38" width="20.28" height="1.5" fill="#333" opacity="0.45"/>
<rect x="223.08" y="17.44" width="20.28" height="4" fill="#000" opacity="0.32"/>
<rect x="223.08" y="20.24" width="20.28" height="1.6" fill="#222" opacity="0.7"/>
<rect x="223.08" y="106.90" width="20.28" height="1.5" fill="#333" opacity="0.45"/>
<rect x="223.08" y="124.64" width="20.28" height="4" fill="#000" opacity="0.32"/>
<rect x="223.08" y="127.44" width="20.28" height="1.6" fill="#222" opacity="0.7"/>
<rect x="223.08" y="192.66" width="20.28" height="1.5" fill="#333" opacity="0.45"/>
<rect x="223.08" y="210.40" width="20.28" height="4" fill="#000" opacity="0.32"/>
<rect x="223.08" y="213.20" width="20.28" height="1.6" fill="#222" opacity="0.7"/>
<rect x="223.08" y="278.42" width="20.28" height="1.5" fill="#333" opacity="0.45"/>
<rect x="223.08" y="317.60" width="20.28" height="4" fill="#000" opacity="0.32"/>
<rect x="223.08" y="320.40" width="20.28" height="1.6" fill="#222" opacity="0.7"/>
<rect x="221.58" y="321.60" width="1.8" height="21.44" fill="#222" opacity="0.6"/>
<rect x="221.58" y="343.04" width="1.8" height="21.44" fill="#222" opacity="0.6"/>
<rect x="221.58" y="364.48" width="1.8" height="21.44" fill="#222" opacity="0.6"/>
<rect x="221.58" y="385.92" width="1.8" height="21.44" fill="#222" opacity="0.6"/>
<rect x="221.58" y="407.36" width="1.8" height="21.44" fill="#222" opacity="0.6"/>
<rect x="223.08" y="428.50" width="20.28" height="1.5" fill="#333" opacity="0.45"/>
<rect x="223.08" y="446.24" width="20.28" height="4" fill="#000" opacity="0.32"/>
<rect x="223.08" y="449.04" width="20.28" height="1.6" fill="#222" opacity="0.7"/>
<rect x="223.08" y="471.38" width="20.28" height="1.5" fill="#333" opacity="0.45"/>
<rect x="243.36" y="17.44" width="20.28" height="4" fill="#000" opacity="0.32"/>
<rect x="243.36" y="20.24" width="20.28" height="1.6" fill="#222" opacity="0.7"/>
<rect x="263.34" y="21.44" width="1.5" height="21.44" fill="#333" opacity="0.45"/>
<rect x="263.34" y="42.88" width="1.5" height="21.44" fill="#333" opacity="0.45"/>
<rect x="263.34" y="64.32" width="1.5" height="21.44" fill="#333" opacity="0.45"/>
<rect x="263.34" y="85.76" width="1.5" height="21.44" fill="#333" opacity="0.45"/>
<rect x="243.36" y="106.90" width="20.28" height="1.5" fill="#333" opacity="0.45"/>
<rect x="243.36" y="124.64" width="20.28" height="4" fill="#000" opacity="0.32"/>
<rect x="243.36" y="127.44" width="20.28" height="1.6" fill="#222" opacity="0.7"/>
<rect x="263.34" y="128.64" width="1.5" height="21.44" fill="#333" opacity="0.45"/>
<rect x="263.34" y="150.08" width="1.5" height="21.44" fill="#333" opacity="0.45"/>
<rect x="263.34" y="171.52" width="1.5" height="21.44" fill="#333" opacity="0.45"/>
<rect x="243.36" y="192.66" width="20.28" height="1.5" fill="#333" opacity="0.45"/>
<rect x="243.36" y="210.40" width="20.28" height="4" fill="#000" opacity="0.32"/>
<rect x="243.36" y="213.20" width="20.28" height="1.6" fill="#222" opacity="0.7"/>
<rect x="263.34" y="214.40" width="1.5" height="21.44" fill="#333" opacity="0.45"/>
<rect x="263.34" y="235.84" width="1.5" height="21.44" fill="#333" opacity="0.45"/>
<rect x="263.34" y="257.28" width="1.5" height="21.44" fill="#333" opacity="0.45"/>
<rect x="243.36" y="278.42" width="20.28" height="1.5" fill="#333" opacity="0.45"/>
<rect x="243.36" y="317.60" width="20.28" height="4" fill="#000" opacity="0.32"/>
<rect x="243.36" y="320.40" width="20.28" height="1.6" fill="#222" opacity="0.7"/>
<rect x="243.36" y="428.50" width="20.28" height="1.5" fill="#333" opacity="0.45"/>
<rect x="243.36" y="446.24" width="20.28" height="4" fill="#000" opacity="0.32"/>
<rect x="243.36" y="449.04" width="20.28" height="1.6" fill="#222" opacity="0.7"/>
<rect x="241.86" y="471.68" width="1.8" height="21.44" fill="#222" opacity="0.6"/>
<rect x="263.34" y="471.68" width="1.5" height="21.44" fill="#333" opacity="0.45"/>
<rect x="241.86" y="493.12" width="1.8" height="21.44" fill="#222" opacity="0.6"/>
<rect x="263.34" y="493.12" width="1.5" height="21.44" fill="#333" opacity="0.45"/>
<rect x="243.36" y="514.26" width="20.28" height="1.5" fill="#333" opacity="0.45"/>
<rect x="263.64" y="317.60" width="20.28" height="4" fill="#000" opacity="0.32"/>
<rect x="263.64" y="320.40" width="20.28" height="1.6" fill="#222" opacity="0.7"/>
<rect x="263.64" y="428.50" width="20.28" height="1.5" fill="#333" opacity="0.45"/>
<rect x="263.64" y="446.24" width="20.28" height="4" fill="#000" opacity="0.32"/>
<rect x="263.64" y="449.04" width="20.28" height="1.6" fill="#222" opacity="0.7"/>
<rect x="263.64" y="471.38" width="20.28" height="1.5" fill="#333" opacity="0.45"/>
<rect x="283.92" y="317.60" width="20.28" height="4" fill="#000" opacity="0.32"/>
<rect x="283.92" y="320.40" width="20.28" height="1.6" fill="#222" opacity="0.7"/>
<rect x="283.92" y="428.50" width="20.28" height="1.5" fill="#333" opacity="0.45"/>
<rect x="283.92" y="446.24" width="20.28" height="4" fill="#000" opacity="0.32"/>
<rect x="283.92" y="449.04" width="20.28" height="1.6" fill="#222" opacity="0.7"/>
<rect x="283.92" y="471.38" width="20.28" height="1.5" fill="#333" opacity="0.45"/>
<rect x="304.20" y="17.44" width="20.28" height="4" fill="#000" opacity="0.32"/>
<rect x="304.20" y="20.24" width="20.28" height="1.6" fill="#222" opacity="0.7"/>
<rect x="302.70" y="21.44" width="1.8" height="21.44" fill="#222" opacity="0.6"/>
<rect x="302.70" y="42.88" width="1.8" height="21.44" fill="#222" opacity="0.6"/>
<rect x="302.70" y="64.32" width="1.8" height="21.44" fill="#222" opacity="0.6"/>
<rect x="302.70" y="85.76" width="1.8" height="21.44" fill="#222" opacity="0.6"/>
<rect x="304.20" y="106.90" width="20.28" height="1.5" fill="#333" opacity="0.45"/>
<rect x="304.20" y="167.52" width="20.28" height="4" fill="#000" opacity="0.32"/>
<rect x="304.20" y="170.32" width="20.28" height="1.6" fill="#222" opacity="0.7"/>
<rect x="302.70" y="171.52" width="1.8" height="21.44" fill="#222" opacity="0.6"/>
<rect x="302.70" y="192.96" width="1.8" height="21.44" fill="#222" opacity="0.6"/>
<rect x="302.70" y="214.40" width="1.8" height="21.44" fill="#222" opacity="0.6"/>
<rect x="302.70" y="235.84" width="1.8" height="21.44" fill="#222" opacity="0.6"/>
<rect x="302.70" y="257.28" width="1.8" height="21.44" fill="#222" opacity="0.6"/>
<rect x="304.20" y="278.42" width="20.28" height="1.5" fill="#333" opacity="0.45"/>
<rect x="304.20" y="317.60" width="20.28" height="4" fill="#000" opacity="0.32"/>
<rect x="304.20" y="320.40" width="20.28" height="1.6" fill="#222" opacity="0.7"/>
<rect x="324.18" y="321.60" width="1.5" height="21.44" fill="#333" opacity="0.45"/>
<rect x="324.18" y="343.04" width="1.5" height="21.44" fill="#333" opacity="0.45"/>
<rect x="324.18" y="364.48" width="1.5" height="21.44" fill="#333" opacity="0.45"/>
<rect x="324.18" y="385.92" width="1.5" height="21.44" fill="#333" opacity="0.45"/>
<rect x="324.18" y="407.36" width="1.5" height="21.44" fill="#333" opacity="0.45"/>
<rect x="304.20" y="428.50" width="20.28" height="1.5" fill="#333" opacity="0.45"/>
<rect x="304.20" y="446.24" width="20.28" height="4" fill="#000" opacity="0.32"/>
<rect x="304.20" y="449.04" width="20.28" height="1.6" fill="#222" opacity="0.7"/>
<rect x="304.20" y="471.38" width="20.28" height="1.5" fill="#333" opacity="0.45"/>
<rect x="324.48" y="17.44" width="20.28" height="4" fill="#000" opacity="0.32"/>
<rect x="324.48" y="20.24" width="20.28" height="1.6" fill="#222" opacity="0.7"/>
<rect x="324.48" y="106.90" width="20.28" height="1.5" fill="#333" opacity="0.45"/>
<rect x="324.48" y="167.52" width="20.28" height="4" fill="#000" opacity="0.32"/>
<rect x="324.48" y="170.32" width="20.28" height="1.6" fill="#222" opacity="0.7"/>
<rect x="324.48" y="278.42" width="20.28" height="1.5" fill="#333" opacity="0.45"/>
<rect x="324.48" y="446.24" width="20.28" height="4" fill="#000" opacity="0.32"/>
<rect x="324.48" y="449.04" width="20.28" height="1.6" fill="#222" opacity="0.7"/>
<rect x="324.48" y="471.38" width="20.28" height="1.5" fill="#333" opacity="0.45"/>
<rect x="344.76" y="17.44" width="20.28" height="4" fill="#000" opacity="0.32"/>
<rect x="344.76" y="20.24" width="20.28" height="1.6" fill="#222" opacity="0.7"/>
<rect x="344.76" y="106.90" width="20.28" height="1.5" fill="#333" opacity="0.45"/>
<rect x="344.76" y="167.52" width="20.28" height="4" fill="#000" opacity="0.32"/>
<rect x="344.76" y="170.32" width="20.28" height="1.6" fill="#222" opacity="0.7"/>
<rect x="344.76" y="278.42" width="20.28" height="1.5" fill="#333" opacity="0.45"/>
<rect x="344.76" y="296.16" width="20.28" height="4" fill="#000" opacity="0.32"/>
<rect x="344.76" y="298.96" width="20.28" height="1.6" fill="#222" opacity="0.7"/>
<rect x="343.26" y="300.16" width="1.8" height="21.44" fill="#222" opacity="0.6"/>
<rect x="364.74" y="300.16" width="1.5" height="21.44" fill="#333" opacity="0.45"/>
<rect x="343.26" y="321.60" width="1.8" height="21.44" fill="#222" opacity="0.6"/>
<rect x="364.74" y="321.60" width="1.5" height="21.44" fill="#333" opacity="0.45"/>
<rect x="343.26" y="343.04" width="1.8" height="21.44" fill="#222" opacity="0.6"/>
<rect x="364.74" y="343.04" width="1.5" height="21.44" fill="#333" opacity="0.45"/>
<rect x="343.26" y="364.48" width="1.8" height="21.44" fill="#222" opacity="0.6"/>
<rect x="364.74" y="364.48" width="1.5" height="21.44" fill="#333" opacity="0.45"/>
<rect x="343.26" y="385.92" width="1.8" height="21.44" fill="#222" opacity="0.6"/>
<rect x="364.74" y="385.92" width="1.5" height="21.44" fill="#333" opacity="0.45"/>
<rect x="343.26" y="407.36" width="1.8" height="21.44" fill="#222" opacity="0.6"/>
<rect x="364.74" y="407.36" width="1.5" height="21.44" fill="#333" opacity="0.45"/>
<rect x="343.26" y="428.80" width="1.8" height="21.44" fill="#222" opacity="0.6"/>
<rect x="364.74" y="428.80" width="1.5" height="21.44" fill="#333" opacity="0.45"/>
<rect x="364.74" y="450.24" width="1.5" height="21.44" fill="#333" opacity="0.45"/>
<rect x="344.76" y="471.38" width="20.28" height="1.5" fill="#333" opacity="0.45"/>
<rect x="365.04" y="17.44" width="20.28" height="4" fill="#000" opacity="0.32"/>
<rect x="365.04" y="20.24" width="20.28" height="1.6" fill="#222" opacity="0.7"/>
<rect x="365.04" y="106.90" width="20.28" height="1.5" fill="#333" opacity="0.45"/>
<rect x="365.04" y="167.52" width="20.28" height="4" fill="#000" opacity="0.32"/>
<rect x="365.04" y="170.32" width="20.28" height="1.6" fill="#222" opacity="0.7"/>
<rect x="365.04" y="278.42" width="20.28" height="1.5" fill="#333" opacity="0.45"/>
<rect x="385.32" y="17.44" width="20.28" height="4" fill="#000" opacity="0.32"/>
<rect x="385.32" y="20.24" width="20.28" height="1.6" fill="#222" opacity="0.7"/>
<rect x="385.32" y="106.90" width="20.28" height="1.5" fill="#333" opacity="0.45"/>
<rect x="385.32" y="167.52" width="20.28" height="4" fill="#000" opacity="0.32"/>
<rect x="385.32" y="170.32" width="20.28" height="1.6" fill="#222" opacity="0.7"/>
<rect x="385.32" y="278.42" width="20.28" height="1.5" fill="#333" opacity="0.45"/>
<rect x="385.32" y="381.92" width="20.28" height="4" fill="#000" opacity="0.32"/>
<rect x="385.32" y="384.72" width="20.28" height="1.6" fill="#222" opacity="0.7"/>
<rect x="383.82" y="385.92" width="1.8" height="21.44" fill="#222" opacity="0.6"/>
<rect x="383.82" y="407.36" width="1.8" height="21.44" fill="#222" opacity="0.6"/>
<rect x="383.82" y="428.80" width="1.8" height="21.44" fill="#222" opacity="0.6"/>
<rect x="383.82" y="450.24" width="1.8" height="21.44" fill="#222" opacity="0.6"/>
<rect x="383.82" y="471.68" width="1.8" height="21.44" fill="#222" opacity="0.6"/>
<rect x="385.32" y="492.82" width="20.28" height="1.5" fill="#333" opacity="0.45"/>
<rect x="405.60" y="17.44" width="20.28" height="4" fill="#000" opacity="0.32"/>
<rect x="405.60" y="20.24" width="20.28" height="1.6" fill="#222" opacity="0.7"/>
<rect x="425.58" y="21.44" width="1.5" height="21.44" fill="#333" opacity="0.45"/>
<rect x="425.58" y="42.88" width="1.5" height="21.44" fill="#333" opacity="0.45"/>
<rect x="425.58" y="64.32" width="1.5" height="21.44" fill="#333" opacity="0.45"/>
<rect x="425.58" y="85.76" width="1.5" height="21.44" fill="#333" opacity="0.45"/>
<rect x="405.60" y="106.90" width="20.28" height="1.5" fill="#333" opacity="0.45"/>
<rect x="405.60" y="167.52" width="20.28" height="4" fill="#000" opacity="0.32"/>
<rect x="405.60" y="170.32" width="20.28" height="1.6" fill="#222" opacity="0.7"/>
<rect x="425.58" y="171.52" width="1.5" height="21.44" fill="#333" opacity="0.45"/>
<rect x="425.58" y="192.96" width="1.5" height="21.44" fill="#333" opacity="0.45"/>
<rect x="425.58" y="214.40" width="1.5" height="21.44" fill="#333" opacity="0.45"/>
<rect x="425.58" y="235.84" width="1.5" height="21.44" fill="#333" opacity="0.45"/>
<rect x="425.58" y="257.28" width="1.5" height="21.44" fill="#333" opacity="0.45"/>
<rect x="405.60" y="278.42" width="20.28" height="1.5" fill="#333" opacity="0.45"/>
<rect x="405.60" y="381.92" width="20.28" height="4" fill="#000" opacity="0.32"/>
<rect x="405.60" y="384.72" width="20.28" height="1.6" fill="#222" opacity="0.7"/>
<rect x="405.60" y="492.82" width="20.28" height="1.5" fill="#333" opacity="0.45"/>
<rect x="425.88" y="317.60" width="20.28" height="4" fill="#000" opacity="0.32"/>
<rect x="425.88" y="320.40" width="20.28" height="1.6" fill="#222" opacity="0.7"/>
<rect x="424.38" y="321.60" width="1.8" height="21.44" fill="#222" opacity="0.6"/>
<rect x="424.38" y="343.04" width="1.8" height="21.44" fill="#222" opacity="0.6"/>
<rect x="445.86" y="343.04" width="1.5" height="21.44" fill="#333" opacity="0.45"/>
<rect x="425.88" y="364.18" width="20.28" height="1.5" fill="#333" opacity="0.45"/>
<rect x="425.88" y="381.92" width="20.28" height="4" fill="#000" opacity="0.32"/>
<rect x="425.88" y="384.72" width="20.28" height="1.6" fill="#222" opacity="0.7"/>
<rect x="425.88" y="492.82" width="20.28" height="1.5" fill="#333" opacity="0.45"/>
<rect x="446.16" y="60.32" width="20.28" height="4" fill="#000" opacity="0.32"/>
<rect x="446.16" y="63.12" width="20.28" height="1.6" fill="#222" opacity="0.7"/>
<rect x="444.66" y="64.32" width="1.8" height="21.44" fill="#222" opacity="0.6"/>
<rect x="466.14" y="64.32" width="1.5" height="21.44" fill="#333" opacity="0.45"/>
<rect x="444.66" y="85.76" width="1.8" height="21.44" fill="#222" opacity="0.6"/>
<rect x="466.14" y="85.76" width="1.5" height="21.44" fill="#333" opacity="0.45"/>
<rect x="444.66" y="107.20" width="1.8" height="21.44" fill="#222" opacity="0.6"/>
<rect x="466.14" y="107.20" width="1.5" height="21.44" fill="#333" opacity="0.45"/>
<rect x="444.66" y="128.64" width="1.8" height="21.44" fill="#222" opacity="0.6"/>
<rect x="466.14" y="128.64" width="1.5" height="21.44" fill="#333" opacity="0.45"/>
<rect x="444.66" y="150.08" width="1.8" height="21.44" fill="#222" opacity="0.6"/>
<rect x="466.14" y="150.08" width="1.5" height="21.44" fill="#333" opacity="0.45"/>
<rect x="444.66" y="171.52" width="1.8" height="21.44" fill="#222" opacity="0.6"/>
<rect x="466.14" y="171.52" width="1.5" height="21.44" fill="#333" opacity="0.45"/>
<rect x="444.66" y="192.96" width="1.8" height="21.44" fill="#222" opacity="0.6"/>
<rect x="466.14" y="192.96" width="1.5" height="21.44" fill="#333" opacity="0.45"/>
<rect x="444.66" y="214.40" width="1.8" height="21.44" fill="#222" opacity="0.6"/>
<rect x="466.14" y="214.40" width="1.5" height="21.44" fill="#333" opacity="0.45"/>
<rect x="444.66" y="235.84" width="1.8" height="21.44" fill="#222" opacity="0.6"/>
<rect x="466.14" y="235.84" width="1.5" height="21.44" fill="#333" opacity="0.45"/>
<rect x="444.66" y="257.28" width="1.8" height="21.44" fill="#222" opacity="0.6"/>
<rect x="466.14" y="257.28" width="1.5" height="21.44" fill="#333" opacity="0.45"/>
<rect x="444.66" y="278.72" width="1.8" height="21.44" fill="#222" opacity="0.6"/>
<rect x="466.14" y="278.72" width="1.5" height="21.44" fill="#333" opacity="0.45"/>
<rect x="444.66" y="300.16" width="1.8" height="21.44" fill="#222" opacity="0.6"/>
<rect x="466.14" y="300.16" width="1.5" height="21.44" fill="#333" opacity="0.45"/>
<rect x="466.14" y="321.60" width="1.5" height="21.44" fill="#333" opacity="0.45"/>
<rect x="446.16" y="342.74" width="20.28" height="1.5" fill="#333" opacity="0.45"/>
<rect x="446.16" y="381.92" width="20.28" height="4" fill="#000" opacity="0.32"/>
<rect x="446.16" y="384.72" width="20.28" height="1.6" fill="#222" opacity="0.7"/>
<rect x="446.16" y="492.82" width="20.28" height="1.5" fill="#333" opacity="0.45"/>
<rect x="466.44" y="381.92" width="20.28" height="4" fill="#000" opacity="0.32"/>
<rect x="466.44" y="384.72" width="20.28" height="1.6" fill="#222" opacity="0.7"/>
<rect x="486.42" y="385.92" width="1.5" height="21.44" fill="#333" opacity="0.45"/>
<rect x="486.42" y="407.36" width="1.5" height="21.44" fill="#333" opacity="0.45"/>
<rect x="486.42" y="428.80" width="1.5" height="21.44" fill="#333" opacity="0.45"/>
<rect x="486.42" y="450.24" width="1.5" height="21.44" fill="#333" opacity="0.45"/>
<rect x="486.42" y="471.68" width="1.5" height="21.44" fill="#333" opacity="0.45"/>
<rect x="466.44" y="492.82" width="20.28" height="1.5" fill="#333" opacity="0.45"/>
<rect x="243.36" y="450.24" width="20.28" height="21.44" fill="#4e4e4e"/>
<rect x="246.36" y="453.24" width="6" height="5" fill="#5e5e5e"/><rect x="254.36" y="460.24" width="6" height="6" fill="#434343"/><rect x="247.36" y="463.24" width="5" height="5" fill="#595959"/>
<rect x="162.24" y="64.32" width="20.28" height="21.44" fill="#5a5a5a"/>
<rect x="162.54" y="65.12" width="19.48" height="19.04" fill="url(#wd)"/>
<rect x="162.54" y="66.92" width="19.48" height="1.3" fill="#3a3026"/>
<rect x="162.54" y="81.76" width="19.48" height="1.3" fill="#3a3026"/>
<rect x="162.54" y="83.56" width="19.48" height="1.2" fill="#6a4a1a"/>
<rect x="425.88" y="64.32" width="20.28" height="21.44" fill="#5a5a5a"/>
<rect x="426.18" y="65.12" width="19.48" height="19.04" fill="url(#wd)"/>
<rect x="426.18" y="66.92" width="19.48" height="1.3" fill="#3a3026"/>
<rect x="426.18" y="81.76" width="19.48" height="1.3" fill="#3a3026"/>
<rect x="426.18" y="83.56" width="19.48" height="1.2" fill="#6a4a1a"/>
<rect x="60.84" y="107.20" width="20.28" height="21.44" fill="#5a5a5a"/>
<rect x="61.14" y="108.00" width="19.48" height="19.04" fill="url(#wd)"/>
<rect x="61.14" y="109.80" width="19.48" height="1.3" fill="#3a3026"/>
<rect x="61.14" y="124.64" width="19.48" height="1.3" fill="#3a3026"/>
<rect x="61.14" y="126.44" width="19.48" height="1.2" fill="#6a4a1a"/>
<rect x="223.08" y="192.96" width="20.28" height="21.44" fill="#5a5a5a"/>
<rect x="223.38" y="193.76" width="19.48" height="19.04" fill="url(#wd)"/>
<rect x="223.38" y="195.56" width="19.48" height="1.3" fill="#3a3026"/>
<rect x="223.38" y="210.40" width="19.48" height="1.3" fill="#3a3026"/>
<rect x="223.38" y="212.20" width="19.48" height="1.2" fill="#6a4a1a"/>
<rect x="425.88" y="235.84" width="20.28" height="21.44" fill="#5a5a5a"/>
<rect x="426.18" y="236.64" width="19.48" height="19.04" fill="url(#wd)"/>
<rect x="426.18" y="238.44" width="19.48" height="1.3" fill="#3a3026"/>
<rect x="426.18" y="253.28" width="19.48" height="1.3" fill="#3a3026"/>
<rect x="426.18" y="255.08" width="19.48" height="1.2" fill="#6a4a1a"/>
<rect x="60.84" y="257.28" width="20.28" height="21.44" fill="#5a5a5a"/>
<rect x="61.14" y="258.08" width="19.48" height="19.04" fill="url(#wd)"/>
<rect x="61.14" y="259.88" width="19.48" height="1.3" fill="#3a3026"/>
<rect x="61.14" y="274.72" width="19.48" height="1.3" fill="#3a3026"/>
<rect x="61.14" y="276.52" width="19.48" height="1.2" fill="#6a4a1a"/>
<rect x="162.24" y="257.28" width="20.28" height="21.44" fill="#5a5a5a"/>
<rect x="162.54" y="258.08" width="19.48" height="19.04" fill="url(#wd)"/>
<rect x="162.54" y="259.88" width="19.48" height="1.3" fill="#3a3026"/>
<rect x="162.54" y="274.72" width="19.48" height="1.3" fill="#3a3026"/>
<rect x="162.54" y="276.52" width="19.48" height="1.2" fill="#6a4a1a"/>
<rect x="344.76" y="278.72" width="20.28" height="21.44" fill="#5a5a5a"/>
<rect x="345.06" y="279.52" width="19.48" height="19.04" fill="url(#wd)"/>
<rect x="345.06" y="281.32" width="19.48" height="1.3" fill="#3a3026"/>
<rect x="345.06" y="296.16" width="19.48" height="1.3" fill="#3a3026"/>
<rect x="345.06" y="297.96" width="19.48" height="1.2" fill="#6a4a1a"/>
<rect x="324.48" y="364.48" width="20.28" height="21.44" fill="#5a5a5a"/>
<rect x="324.78" y="365.28" width="19.48" height="19.04" fill="url(#wd)"/>
<rect x="324.78" y="367.08" width="19.48" height="1.3" fill="#3a3026"/>
<rect x="324.78" y="381.92" width="19.48" height="1.3" fill="#3a3026"/>
<rect x="324.78" y="383.72" width="19.48" height="1.2" fill="#6a4a1a"/>
<rect x="425.88" y="364.48" width="20.28" height="21.44" fill="#5a5a5a"/>
<rect x="426.18" y="365.28" width="19.48" height="19.04" fill="url(#wd)"/>
<rect x="426.18" y="367.08" width="19.48" height="1.3" fill="#3a3026"/>
<rect x="426.18" y="381.92" width="19.48" height="1.3" fill="#3a3026"/>
<rect x="426.18" y="383.72" width="19.48" height="1.2" fill="#6a4a1a"/>
<rect x="60.84" y="385.92" width="20.28" height="21.44" fill="#5a5a5a"/>
<rect x="61.14" y="386.72" width="19.48" height="19.04" fill="url(#wd)"/>
<rect x="61.14" y="388.52" width="19.48" height="1.3" fill="#3a3026"/>
<rect x="61.14" y="403.36" width="19.48" height="1.3" fill="#3a3026"/>
<rect x="61.14" y="405.16" width="19.48" height="1.2" fill="#6a4a1a"/>
<rect x="365.04" y="428.80" width="20.28" height="21.44" fill="#5a5a5a"/>
<rect x="365.34" y="429.60" width="19.48" height="19.04" fill="url(#wd)"/>
<rect x="365.34" y="431.40" width="19.48" height="1.3" fill="#3a3026"/>
<rect x="365.34" y="446.24" width="19.48" height="1.3" fill="#3a3026"/>
<rect x="365.34" y="448.04" width="19.48" height="1.2" fill="#6a4a1a"/>
<rect x="121.68" y="450.24" width="20.28" height="21.44" fill="#5a5a5a"/>
<rect x="121.98" y="451.04" width="19.48" height="19.04" fill="url(#wd)"/>
<rect x="121.98" y="452.84" width="19.48" height="1.3" fill="#3a3026"/>
<rect x="121.98" y="467.68" width="19.48" height="1.3" fill="#3a3026"/>
<rect x="121.98" y="469.48" width="19.48" height="1.2" fill="#6a4a1a"/>
<rect x="60.34" y="0.00" width="21.28" height="21.44" fill="#2e2e2e"/>
<rect x="63.44" y="3.20" width="15.08" height="15.24" fill="url(#bl)"/>
<path d="M65.84 6.00V16.00M70.84 5.00V16.00M75.84 6.00V16.00M65.84 8.00H75.84" stroke="#9cc4ee" stroke-width="0.9" fill="none" opacity="0.8"/>
<rect x="242.86" y="514.56" width="21.28" height="21.44" fill="#2e2e2e"/>
<rect x="245.96" y="517.76" width="15.08" height="15.24" fill="url(#bl)"/>
<path d="M248.36 520.56V530.56M253.36 519.56V530.56M258.36 520.56V530.56M248.36 522.56H258.36" stroke="#9cc4ee" stroke-width="0.9" fill="none" opacity="0.8"/>
<rect x="61.84" y="451.04" width="18.28" height="19.84" fill="#4a4a4a" stroke="#f4f4f4" stroke-width="1.6"/>
<path d="M70.98 452.96L75.58 460.46L70.98 467.96L66.38 460.46Z" fill="#1b5fe0"/>
<path d="M70.98 452.96L72.48 457.96L68.98 457.96Z" fill="#cfe4ff"/><path d="M70.98 467.96L73.38 463.36L70.48 463.96Z" fill="#bcd8ff"/>
<ellipse cx="254.00" cy="498.02" rx="3.6" ry="3.4" fill="#f0b63a"/>
<rect x="252.00" y="499.02" width="4" height="3.4" fill="#f1cfae"/>
<rect x="250.60" y="502.12" width="6.8" height="5" fill="#5a4634"/>
<rect x="253.50" y="503.52" width="4.5" height="2" fill="#c8a070"/>
<rect x="252.00" y="506.92" width="3.4" height="4.6" fill="#28406a"/>
<rect x="252.00" y="511.02" width="3.4" height="1.6" fill="#3a2a22"/>
<rect x="505.5" y="0" width="1.1" height="536.4" fill="#111" opacity="0.55"/><rect x="0" y="535.3" width="506.6" height="1.1" fill="#111" opacity="0.55"/>
</svg>
<div class="t " style="left:1269px;top:704.6px;color:#e2e2e2">Coordinates :</div>
<div class="t " style="right:501.5px;top:704.6px;color:#e2e2e2">3,21</div>
<div style="left:258px;top:843.5px;width:1163px;height:2.5px;background:#191919"></div>
<div class="hdr" style="left:258px;top:846px;width:1163px;height:20px"></div>
<div class="tab" style="left:258px;top:846px;width:92.5px;height:20px;border-top:2px solid #3a72b0;border-radius:3px 3px 0 0"></div>
<div class="t tabt" style="left:265px;top:850.1px;letter-spacing:0.15px">Event Action</div>
<svg style="left:1406px;top:850px" width="3" height="12"><rect x="0" y="0" width="3" height="2.6" fill="#c4c4c4"/><rect x="0" y="4.3" width="3" height="2.6" fill="#c4c4c4"/><rect x="0" y="8.6" width="3" height="2.6" fill="#c4c4c4"/></svg>
<div class="t " style="left:259px;top:867.1px;color:#d0d0d0">Actions</div>
<div style="left:258px;top:882px;width:1163px;height:155px;background:#343434"></div>
<div class="lrow sel" style="top:882.7px;height:20.6px"></div>
<div class="lrow" style="top:904.3px;height:20.7px"></div>
<div class="lrow" style="top:926.0px;height:23.3px"></div>
<div class="lrow" style="top:950.3px;height:21.4px"></div>
<div class="lrow" style="top:972.7px;height:20.6px"></div>
<div class="lrow" style="top:994.3px;height:20.0px"></div>
<div class="lrow" style="top:1015.3px;height:20.4px"></div>
<svg style="left:265px;top:886.9px" width="11.6" height="11.6"><path d="M5.8 0L11.6 5.8L5.8 11.6L0 5.8Z" fill="#f2f2f2"/></svg>
<div class="t " style="left:278px;top:885.3px;color:#e8eef6;letter-spacing:-0.17px">Show Picture : #1, charaupperbody_001_Actor, Center (1500,650), (100%,100%), 255, Regular</div>
<svg style="left:265px;top:908.2px" width="11.6" height="11.6"><path d="M5.8 0L11.6 5.8L5.8 11.6L0 5.8Z" fill="#f2f2f2"/></svg>
<div class="t " style="left:281.5px;top:906.6px;color:#e2e2e2;letter-spacing:-0.05px">Text: Craft, charaface_001_Actor, charaupperbody_001_Actor, Window, Initial Settings</div>
<svg style="left:279px;top:931.7px" width="11.6" height="11.6"><path d="M5.8 0.9L10.7 5.8L5.8 10.7L0.9 5.8Z" fill="none" stroke="#e8e8e8" stroke-width="1.1"/></svg>
<div class="t " style="left:290.5px;top:930.1px;color:#e2e2e2">#</div>
<div class="inp" style="left:300.7px;top:927.3px;width:1113.6px;height:19.4px;border-color:#262626"></div>
<div class="t " style="left:304px;top:930.1px;color:#e2e2e2;letter-spacing:-0.3px">I messed up! It's a goblin!</div>
<svg style="left:265px;top:955.2px" width="11.6" height="11.6"><path d="M5.8 0L11.6 5.8L5.8 11.6L0 5.8Z" fill="#f2f2f2"/></svg>
<div class="t " style="left:278px;top:953.6px;color:#e2e2e2;letter-spacing:-0.2px">Remove Picture : #<span style="position:static;font-size:10px;letter-spacing:-0.3px">なし</span></div>
<svg style="left:265px;top:976.7px" width="11.6" height="11.6"><path d="M5.8 0L11.6 5.8L5.8 11.6L0 5.8Z" fill="#f2f2f2"/></svg>
<div class="t " style="left:278px;top:975.1px;color:#e2e2e2;letter-spacing:-0.17px">Battle Processing : Enemy Groups&nbsp; Goblin</div>
<svg style="left:265px;top:998.2px" width="11.6" height="11.6"><path d="M5.8 0L11.6 5.8L5.8 11.6L0 5.8Z" fill="#f2f2f2"/></svg>
<div class="t " style="left:278px;top:996.6px;color:#e2e2e2;letter-spacing:-0.1px">Temporarily Remove Event :</div>
<svg style="left:265px;top:1019.2px" width="11.6" height="11.6"><path d="M5.8 0L11.6 5.8L5.8 11.6L0 5.8Z" fill="#f2f2f2"/></svg>
<div style="left:1421px;top:125px;width:2px;height:955px;background:#191919"></div>
<div class="hdr" style="left:1423px;top:125px;width:497px;height:20px;border-radius:4px 0 0 0"></div>
<div class="tab" style="left:1423px;top:125px;width:89px;height:20px;border-radius:3px 3px 0 0"></div>
<div class="t tabt" style="left:1430px;top:128.6px;">RPG Setting</div>
<svg style="left:1916px;top:129px" width="3" height="12"><rect x="0" y="0" width="3" height="2.6" fill="#c4c4c4"/><rect x="0" y="4.3" width="3" height="2.6" fill="#c4c4c4"/><rect x="0" y="8.6" width="3" height="2.6" fill="#c4c4c4"/></svg>
<div style="left:1423px;top:145px;width:497px;height:623px;overflow:hidden">
<div class="cb" style="left:58px;top:-4.0px"></div>
<div class="t " style="left:76px;top:-5.9px;color:#e2e2e2">Characters</div>
<div style="left:232px;top:0;width:79.3px;height:54.8px;background:#4a4a4a;border-radius:0 0 2px 2px"></div>
<svg style="left:231.8px;top:0px" width="80" height="55" viewBox="0 0 80 55">
<path d="M31.9 0H51.1V3.9L48.2 6.9H34.8L31.9 3.9Z" fill="#a88c5c"/>
<rect x="34.8" y="0" width="13.3" height="8.1" fill="#c2a48e"/>
<rect x="36.0" y="0.6" width="3.4" height="2.6" fill="#a050a0"/><rect x="43.7" y="0.6" width="3.4" height="2.6" fill="#a050a0"/>
<path d="M35.3 6.6H47.7L45.2 11.0H37.8Z" fill="#4c4444"/>
<path d="M35.3 11.6L29.7 22.4" stroke="#a8786a" stroke-width="2.6" stroke-linecap="round"/>
<path d="M47.7 11.6L52.2 23.2" stroke="#a8786a" stroke-width="2.6" stroke-linecap="round"/>
<circle cx="29.4" cy="23.9" r="2.6" fill="#9a5a4c"/><circle cx="52.6" cy="25.4" r="3" fill="#8a4e44"/>
<path d="M35.6 10.6H47.4L46.0 22.4H36.8Z" fill="#b47868"/>
<rect x="37.1" y="17.2" width="8.9" height="2.2" fill="#c4a0a0"/>
<rect x="36.3" y="22.4" width="3.2" height="21.5" fill="#8c6c5e"/>
<rect x="42.3" y="22.4" width="3.2" height="21.5" fill="#8c6c5e"/>
<rect x="38.8" y="21.7" width="4.9" height="16.6" fill="#a0407c"/>
<rect x="35.9" y="42.7" width="3.6" height="4.4" fill="#a04848"/><rect x="41.2" y="42.7" width="3.6" height="4.4" fill="#a04848"/>
</svg>
<div style="left:232px;top:61px;width:79px;height:84px;background:#595959;border-radius:2px"></div>
<svg style="left:231.8px;top:61px" width="80" height="84" viewBox="0 0 80 84">
<defs><linearGradient id="cg" x1="0" y1="0" x2="1" y2="1"><stop offset="0" stop-color="#3aa0ff"/><stop offset="0.5" stop-color="#0f5fe6"/><stop offset="1" stop-color="#0a3fb8"/></linearGradient><filter id="bf" x="-30%" y="-60%" width="160%" height="220%"><feGaussianBlur stdDeviation="0.9"/></filter></defs>
<ellipse cx="40" cy="72.9" rx="6.8" ry="2.4" fill="#2660b4" opacity="0.9" filter="url(#bf)"/>
<polygon points="39.7,7.0 51.6,18.5 57.1,32.6 54.9,48.2 40.3,65.2 29.7,52.6 22.2,34.8 26.7,21.5" fill="url(#cg)" stroke="#3fa8ff" stroke-width="0.7"/>
<polygon points="39.7,7.0 26.7,21.5 22.2,34.8 31.1,36.3 34.1,24.5 47.4,21.5" fill="#3d9cfa"/>
<polygon points="39.7,7.0 28.2,23.0 31.4,27.1 43.3,16.5" fill="#dff0ff"/>
<polygon points="37.8,11.1 30.4,23.6 34.1,23.0 40.8,14.8" fill="#ffffff"/>
<polygon points="39.7,7.0 51.6,18.5 57.1,32.6 50.4,30.4 47.4,21.5 43.3,16.5" fill="#0b3fc4"/>
<polygon points="34.1,24.5 47.4,21.5 50.4,30.4 41.5,37.8 31.1,36.3" fill="#1a6cf0"/>
<polygon points="22.2,34.8 31.1,36.3 41.5,37.8 36.3,49.7 29.7,52.6" fill="#0d49cf"/>
<polygon points="41.5,37.8 50.4,30.4 57.1,32.6 54.9,48.2 40.3,65.2 36.3,49.7" fill="#125be2"/>
<polygon points="50.4,30.4 57.1,32.6 54.9,48.2 47.4,46.7" fill="#0c47cc"/>
<polygon points="47.4,46.7 54.9,48.2 40.3,65.2 40.3,58.6" fill="#2a86f6"/>
<polygon points="29.7,52.6 36.3,49.7 39.4,63.3 40.3,65.2" fill="#d4ebff"/>
</svg>
<div class="cb" style="left:58px;top:96.5px"></div>
<svg style="left:58px;top:96.5px" width="14" height="14"><path d="M3.2 7.3L6 10L11 4.2" fill="none" stroke="#f0f0f0" stroke-width="1.7"/></svg>
<div class="t " style="left:76px;top:96.1px;color:#e2e2e2">Select an Image</div>
<div class="t " style="left:56px;top:153.1px;color:#e2e2e2">Name</div>
<div class="sec" style="left:0px;top:169.0px;width:497px;height:19.0px"></div>

<svg style="left:36px;top:175.0px" width="9.5" height="8"><path d="M0 0L9.5 0L4.75 8Z" fill="#858585"/></svg>
<div class="t " style="left:57px;top:171.1px;color:#e2e2e2">Autonomous Movement</div>
<div class="t " style="left:56px;top:194.6px;color:#e2e2e2">Type</div>
<div class="btn" style="left:232px;top:193.0px;width:252px;height:18.0px;line-height:17.5px">0001 : Fixed</div>
<div class="btn dis" style="left:232px;top:217.5px;width:252px;height:18.0px;line-height:17.5px">Start Editing</div>
<div class="btn dis" style="left:232px;top:242.0px;width:252px;height:18.5px;line-height:18.0px">Reset Route</div>
<div class="btn dis" style="left:232px;top:266.5px;width:252px;height:18.5px;line-height:18.0px">Preview</div>
<div class="sec" style="left:47px;top:288.0px;width:450px;height:19.0px"></div>
<svg style="left:49px;top:294.0px" width="9.5" height="8"><path d="M0 0L9.5 0L4.75 8Z" fill="#858585"/></svg>
<div class="t " style="left:70px;top:289.6px;color:#e2e2e2">Options</div>
<div class="cb" style="left:73px;top:315.0px"></div>
<div class="t " style="left:91px;top:314.6px;color:#e2e2e2">Repeat Actions</div>
<div class="cb" style="left:73px;top:340.0px"></div>
<div class="t " style="left:91px;top:339.6px;color:#e2e2e2">Skip If Unable to Move</div>
<div class="t " style="left:56px;top:364.6px;color:#e2e2e2">Movement Speed</div>
<div class="btn" style="left:232px;top:363.0px;width:252px;height:18.5px;line-height:18.0px">0004 : Normal</div>
<div class="t " style="left:56px;top:389.6px;color:#e2e2e2">Direction</div>
<div class="btn" style="left:232px;top:387.5px;width:252px;height:18.5px;line-height:18.0px">0001 : Movement Direction</div>
<div class="cb" style="left:231px;top:415.0px"></div>
<div class="t " style="left:249px;top:414.6px;color:#e2e2e2">Fixed Direction</div>
<div class="t " style="left:56px;top:439.6px;color:#e2e2e2">Walking Animation</div>
<div class="btn" style="left:232px;top:438.0px;width:252px;height:18.5px;line-height:18.0px">0001 : ON</div>
<div class="t " style="left:56px;top:464.1px;color:#e2e2e2">Walk in Place</div>
<div class="btn" style="left:232px;top:462.5px;width:252px;height:18.5px;line-height:18.0px">0001 : ON</div>
<div class="t " style="left:56px;top:488.6px;color:#e2e2e2">Pass Through</div>
<div class="btn" style="left:232px;top:487.0px;width:252px;height:18.5px;line-height:18.0px">0002 : OFF</div>
<div class="t " style="left:56px;top:513.6px;color:#e2e2e2">Frequency</div>
<div class="btn" style="left:232px;top:512.0px;width:252px;height:18.5px;line-height:18.0px">0003 : Normal</div>
<div class="sec" style="left:0px;top:532.5px;width:497px;height:20.0px"></div>
<svg style="left:36px;top:539.0px" width="9.5" height="8"><path d="M0 0L9.5 0L4.75 8Z" fill="#858585"/></svg>
<div class="t " style="left:57px;top:534.6px;color:#e2e2e2">Priority</div>
<div class="t " style="left:56px;top:558.6px;color:#e2e2e2">Priority</div>
<div class="btn" style="left:232px;top:557.0px;width:252px;height:18.5px;line-height:18.0px">0002 : Same as characters</div>
<div class="sec" style="left:0px;top:578.0px;width:497px;height:19.5px"></div>
<svg style="left:36px;top:584.0px" width="9.5" height="8"><path d="M0 0L9.5 0L4.75 8Z" fill="#858585"/></svg>
<div class="t " style="left:57px;top:579.6px;color:#e2e2e2">Trigger</div>
<div class="t " style="left:56px;top:603.6px;color:#e2e2e2">Trigger</div>
<div class="btn" style="left:232px;top:601.5px;width:252px;height:18.5px;line-height:18.0px">0002 : Player Touch</div>
</div>
<div style="left:1423px;top:768px;width:497px;height:2.5px;background:#191919"></div>
<div class="hdr" style="left:1423px;top:770.5px;width:497px;height:19.5px"></div>
<div class="tab" style="left:1423px;top:770.5px;width:114px;height:19.5px;border-radius:3px 3px 0 0"></div>
<div class="t tabt" style="left:1430px;top:774.1px;">Event Command</div>
<svg style="left:1916px;top:774px" width="3" height="12"><rect x="0" y="0" width="3" height="2.6" fill="#c4c4c4"/><rect x="0" y="4.3" width="3" height="2.6" fill="#c4c4c4"/><rect x="0" y="8.6" width="3" height="2.6" fill="#c4c4c4"/></svg>
<div style="left:1423px;top:790px;width:497px;height:290px;overflow:hidden">
<div class="t " style="left:39px;top:-7.9px;color:#e2e2e2">Origin</div>
<div class="rd" style="left:227px;top:-5.0px"></div>
<div class="t " style="left:246px;top:-6.4px;color:#e2e2e2">Top Left</div>
<div class="rd on" style="left:299px;top:-5.0px"></div>
<div class="t " style="left:317px;top:-6.4px;color:#e2e2e2">Center</div>
<div class="rd on" style="left:47px;top:27.0px"></div>
<div class="t " style="left:65px;top:25.6px;color:#e2e2e2">Set Directly</div>
<div class="t " style="left:45px;top:49.1px;color:#e2e2e2">X :</div>
<div class="inp" style="left:223px;top:46.5px;width:259px;height:19.0px;padding-left:2px;line-height:17.0px">1500</div>
<div class="t " style="left:45px;top:72.6px;color:#e2e2e2">Y :</div>
<div class="inp" style="left:223px;top:70.0px;width:259px;height:19.0px;padding-left:2px;line-height:17.0px">650</div>
<div class="rd" style="left:47px;top:94.5px"></div>
<div class="t " style="left:65px;top:93.1px;color:#e2e2e2">Set with Variables</div>
<div class="t " style="left:45px;top:116.6px;color:#e2e2e2">X :</div>
<div class="t " style="left:221px;top:115.6px;color:#e2e2e2">[</div>
<div class="btn dis" style="left:232px;top:115.0px;width:241px;height:18.0px;line-height:17.5px">0001 : Undefined</div>
<div class="t " style="left:478px;top:115.6px;color:#e2e2e2">]</div>
<div class="t " style="left:45px;top:141.1px;color:#e2e2e2">Y :</div>
<div class="t " style="left:221px;top:140.1px;color:#e2e2e2">[</div>
<div class="btn dis" style="left:232px;top:139.5px;width:241px;height:18.0px;line-height:17.5px">0001 : Undefined</div>
<div class="t " style="left:478px;top:140.1px;color:#e2e2e2">]</div>
<div class="sec" style="left:0px;top:167.0px;width:497px;height:19.5px"></div>
<svg style="left:17px;top:173.0px" width="9.5" height="8"><path d="M0 0L9.5 0L4.75 8Z" fill="#858585"/></svg>
<div class="t " style="left:38px;top:169.1px;color:#e2e2e2">Scale</div>
<div class="t " style="left:39px;top:192.6px;color:#e2e2e2">Width</div>
<div class="t " style="left:219px;top:192.1px;color:#e2e2e2">[</div>
<div class="inp" style="left:229px;top:190.0px;width:232px;height:19.0px;padding-left:2px;line-height:17.0px">100</div>
<div class="t " style="left:465px;top:192.6px;color:#e2e2e2">]</div>
<div class="t " style="left:473px;top:192.6px;color:#e2e2e2">%</div>
<div class="t " style="left:39px;top:216.1px;color:#e2e2e2">Height</div>
<div class="t " style="left:219px;top:215.6px;color:#e2e2e2">[</div>
<div class="inp" style="left:229px;top:213.5px;width:232px;height:19.0px;padding-left:2px;line-height:17.0px">100</div>
<div class="t " style="left:465px;top:216.1px;color:#e2e2e2">]</div>
<div class="t " style="left:473px;top:216.1px;color:#e2e2e2">%</div>
<div class="sec" style="left:0px;top:234.5px;width:497px;height:19.5px"></div>
<svg style="left:17px;top:241.0px" width="9.5" height="8"><path d="M0 0L9.5 0L4.75 8Z" fill="#858585"/></svg>
<div class="t " style="left:38px;top:236.6px;color:#e2e2e2">Blend</div>
<div class="t " style="left:39px;top:260.1px;color:#e2e2e2">Opacity</div>
<div class="inp" style="left:221px;top:257.5px;width:263px;height:19.0px;padding-left:2px;line-height:17.0px">255</div>
<div class="t " style="left:39px;top:281.6px;color:#e2e2e2">Blend Mode</div>
<div class="btn" style="left:222px;top:281.5px;width:262px;height:18.5px;line-height:18.0px">0001 : Regular</div>
</div>
</div></body></html>
